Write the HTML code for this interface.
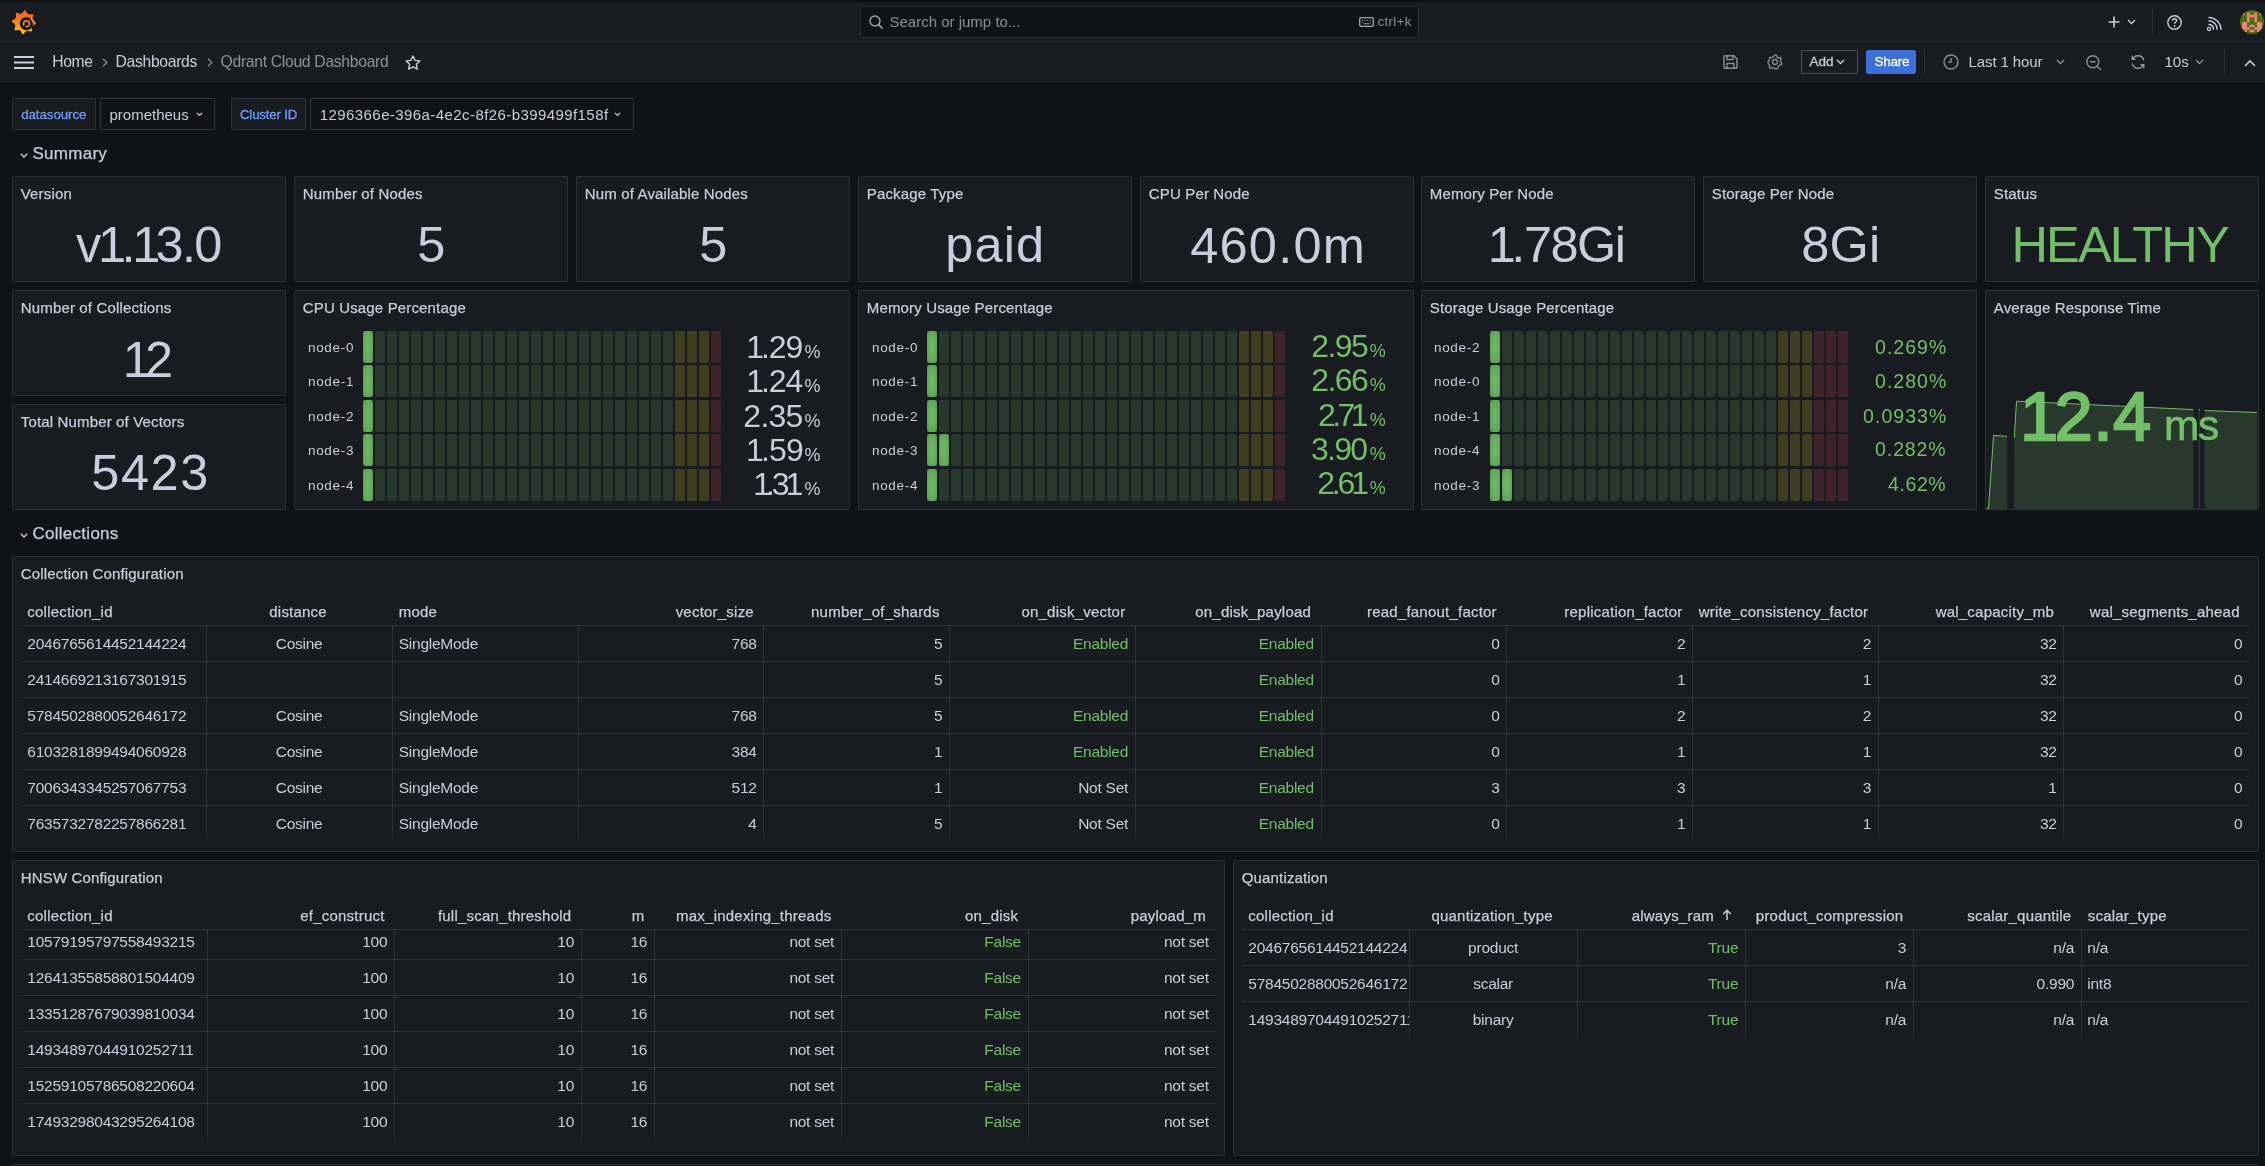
<!DOCTYPE html><html><head><meta charset="utf-8"><title>Qdrant Cloud Dashboard</title><style>
*{box-sizing:border-box;margin:0;padding:0}
html,body{width:2265px;height:1166px;overflow:hidden;background:#111217;font-family:"Liberation Sans",sans-serif;color:#ccccdc}
.a{position:absolute}
.panel{position:absolute;background:#181b1f;border:1px solid rgba(204,204,220,0.12);border-radius:2px;overflow:hidden}
.t{position:absolute;white-space:nowrap;line-height:1}
.cell{position:absolute;border-radius:2px}
svg{position:absolute;overflow:visible}
</style></head><body><div style="position:absolute;left:0;top:0;width:2265px;height:1166px;will-change:transform">
<div class="a" style="left:0px;top:0px;width:2265px;height:2px;background:#0e0e10;"></div>
<div class="a" style="left:0px;top:2px;width:2265px;height:39px;background:#181b1f;"></div>
<div class="a" style="left:0px;top:41px;width:2265px;height:1px;background:rgba(204,204,220,0.12);"></div>
<div class="a" style="left:0px;top:42px;width:2265px;height:39px;background:#181b1f;"></div>
<div class="a" style="left:0px;top:81px;width:2265px;height:1px;background:rgba(204,204,220,0.12);"></div>
<svg style="left:12px;top:10px" width="24" height="24" viewBox="0 0 24 24">
<defs><linearGradient id="lg" x1="0" y1="0" x2="0" y2="1"><stop offset="0" stop-color="#f15b2a"/><stop offset="0.45" stop-color="#f47f20"/><stop offset="1" stop-color="#fcc80f"/></linearGradient></defs>
<path fill="url(#lg)" d="M10.56 2.69 L12.11 0.30 L13.76 0.45 L14.87 3.07 L16.15 4.04 L17.68 4.53 L20.46 3.93 L21.53 5.21 L20.45 7.84 L20.67 9.43 L21.41 10.86 L23.80 12.41 L23.65 14.06 L21.03 15.17 L20.06 16.45 L19.57 17.98 L20.17 20.76 L18.89 21.83 L16.26 20.75 L14.67 20.97 L13.24 21.71 L11.69 24.10 L10.04 23.95 L8.93 21.33 L7.65 20.36 L6.12 19.87 L3.34 20.47 L2.27 19.19 L3.35 16.56 L3.13 14.97 L2.39 13.54 L0.00 11.99 L0.15 10.34 L2.77 9.23 L3.74 7.95 L4.23 6.42 L3.63 3.64 L4.91 2.57 L7.54 3.65 L9.13 3.43Z"/>
<circle cx="14.5" cy="13.6" r="5.2" fill="none" stroke="#181b1f" stroke-width="3.0"/>
<path d="M19.2 7.6 C21.5 9.2 22.6 11.2 22.6 13.6 L20.2 12.6 C19.9 11.0 19.2 9.8 18.0 9.0 Z" fill="#f58a1c"/>
<circle cx="14.5" cy="13.9" r="2.2" fill="#181b1f"/>
<path d="M13.6 15.0 L11.9 16.9" stroke="#181b1f" stroke-width="1.5"/>
</svg>
<div class="a" style="left:860px;top:6px;width:559px;height:32px;background:#111217;border:1px solid rgba(204,204,220,0.15);border-radius:2px;"></div>
<svg style="left:869px;top:15px" width="14" height="14" viewBox="0 0 14 14"><circle cx="6" cy="6" r="5" fill="none" stroke="#a4a4ad" stroke-width="1.4"/><path d="M9.6 9.6 L13.2 13.2" stroke="#a4a4ad" stroke-width="1.5" stroke-linecap="round"/></svg>
<div class="t" style="left:889.5px;top:14.00px;font-size:15px;color:rgba(204,204,220,0.65);font-weight:normal;">Search or jump to...</div>
<svg style="left:1359px;top:17px" width="15" height="10" viewBox="0 0 15 10"><rect x="0.7" y="0.7" width="13.6" height="8.6" rx="1.2" fill="none" stroke="#a4a4ad" stroke-width="1.3"/><path d="M2.8 3.2h1.2M5.3 3.2h1.2M7.8 3.2h1.2M10.3 3.2h1.2M2.8 5.2h0.8M11.2 5.2h0.8M4.5 6.8h6" stroke="#a4a4ad" stroke-width="1.1"/></svg>
<div class="t" style="left:1377.5px;top:15.00px;font-size:13.3px;color:rgba(204,204,220,0.65);font-weight:normal;letter-spacing:0.35px">ctrl+k</div>
<svg style="left:2108px;top:16px" width="12" height="12" viewBox="0 0 12 12"><path d="M6 0.5V11.5M0.5 6H11.5" stroke="#ccccdc" stroke-width="1.6"/></svg>
<svg style="left:2127px;top:19px" width="9" height="6" viewBox="0 0 9 6"><path d="M1 1L4.5 4.5L8 1" fill="none" stroke="#ccccdc" stroke-width="1.4"/></svg>
<div class="a" style="left:2152px;top:10px;width:1px;height:24px;background:rgba(204,204,220,0.12);"></div>
<svg style="left:2167px;top:14.5px" width="15" height="15" viewBox="0 0 15 15"><circle cx="7.5" cy="7.5" r="6.7" fill="none" stroke="#ccccdc" stroke-width="1.4"/><path d="M5.4 5.7C5.4 4.4 6.4 3.7 7.5 3.7C8.7 3.7 9.6 4.5 9.6 5.6C9.6 7 7.6 7.1 7.6 8.7" fill="none" stroke="#ccccdc" stroke-width="1.4"/><circle cx="7.6" cy="11" r="0.9" fill="#ccccdc"/></svg>
<svg style="left:2207px;top:16.5px" width="15" height="14" viewBox="0 0 15 14"><circle cx="2" cy="12" r="1.6" fill="none" stroke="#ccccdc" stroke-width="1.2"/><path d="M1.5 7.5C4.5 7.5 6.5 9.5 6.5 12.7M1.5 3.8C6.5 3.8 10.2 7.5 10.2 12.7M1.5 0.5C8.5 0.5 14 6 14 12.7" fill="none" stroke="#ccccdc" stroke-width="1.4"/></svg>
<svg style="left:2240px;top:10px" width="24" height="24" viewBox="0 0 24 24"><defs><clipPath id="avc"><circle cx="12" cy="12" r="12"/></clipPath></defs><circle cx="12" cy="12" r="12" fill="#4b6e0c"/><g clip-path="url(#avc)" fill="#f2847e"><rect x="2.10" y="2.30" width="2.47" height="2.47"/><rect x="19.39" y="2.30" width="2.47" height="2.47"/><rect x="7.04" y="2.30" width="2.47" height="9.88"/><rect x="14.45" y="2.30" width="2.47" height="9.88"/><rect x="9.51" y="4.77" width="4.94" height="2.47"/><rect x="2.10" y="12.18" width="4.94" height="7.41"/><rect x="16.92" y="12.18" width="4.94" height="7.41"/><rect x="7.04" y="17.12" width="2.47" height="2.47"/><rect x="14.45" y="17.12" width="2.47" height="2.47"/><rect x="9.51" y="14.65" width="4.94" height="2.47"/><rect x="4.57" y="19.59" width="2.47" height="2.47"/><rect x="16.92" y="19.59" width="2.47" height="2.47"/><rect x="9.51" y="19.59" width="4.94" height="2.47"/></g></svg>
<svg style="left:14px;top:56px" width="20" height="13" viewBox="0 0 20 13"><path d="M0 1H20M0 6.5H20M0 12H20" stroke="#ccccdc" stroke-width="1.8"/></svg>
<div class="t" style="left:52.2px;top:54.00px;font-size:15.7px;color:#ccccdc;font-weight:normal;letter-spacing:-0.32px">Home</div>
<svg style="left:101.5px;top:57.5px" width="6" height="9" viewBox="0 0 6 9"><path d="M1 0.8L4.8 4.5L1 8.2" fill="none" stroke="rgba(204,204,220,0.65)" stroke-width="1.3"/></svg>
<div class="t" style="left:115.6px;top:54.00px;font-size:15.7px;color:#ccccdc;font-weight:normal;letter-spacing:-0.32px">Dashboards</div>
<svg style="left:206.5px;top:57.5px" width="6" height="9" viewBox="0 0 6 9"><path d="M1 0.8L4.8 4.5L1 8.2" fill="none" stroke="rgba(204,204,220,0.65)" stroke-width="1.3"/></svg>
<div class="t" style="left:220.6px;top:54.00px;font-size:15.7px;color:rgba(204,204,220,0.65);font-weight:normal;letter-spacing:-0.3px">Qdrant Cloud Dashboard</div>
<svg style="left:405px;top:55px" width="16" height="15" viewBox="0 0 16 15"><path d="M8 1L10.1 5.4L14.9 6L11.4 9.3L12.3 14.1L8 11.8L3.7 14.1L4.6 9.3L1.1 6L5.9 5.4Z" fill="none" stroke="#ccccdc" stroke-width="1.4" stroke-linejoin="round"/></svg>
<svg style="left:1723px;top:55px" width="15" height="14" viewBox="0 0 15 14"><path d="M1 1.5V12.5A0.8 0.8 0 0 0 1.8 13.3H13.2A0.8 0.8 0 0 0 14 12.5V4L11 0.8H1.8A0.8 0.8 0 0 0 1 1.5Z" fill="none" stroke="rgba(204,204,220,0.65)" stroke-width="1.4"/><path d="M4 1V4.5H10V1M4 13V8.5H11V13" fill="none" stroke="rgba(204,204,220,0.65)" stroke-width="1.3"/></svg>
<svg style="left:1767px;top:54px" width="16" height="16" viewBox="0 0 16 16"><path d="M8 0.9L9.4 1.2L9.8 3.1L11.5 4.1L13.3 3.4L14.3 4.6L13.5 6.3V8.3L14.9 9.6L14.2 11L12.3 11.1L11 12.6L11 14.5L9.6 15H8.2L6.8 13.6H5L3.5 14.5L2.3 13.5L2.7 11.6L1.7 10L0.9 8.6L1.4 7.2L2.7 6L2.5 4.1L3.7 3.1L5.5 3.6L6.8 2.4Z" fill="none" stroke="rgba(204,204,220,0.65)" stroke-width="1.3" stroke-linejoin="round"/><circle cx="8" cy="8" r="2.5" fill="none" stroke="rgba(204,204,220,0.65)" stroke-width="1.3"/></svg>
<div class="a" style="left:1801px;top:50px;width:57px;height:24px;background:transparent;border:1px solid rgba(204,204,220,0.3);border-radius:2px;"></div>
<div class="t" style="left:1809.5px;top:55.00px;font-size:13.5px;color:#ccccdc;font-weight:normal;-webkit-text-stroke:0.3px #ccccdc">Add</div>
<svg style="left:1836px;top:58.8px" width="9" height="6" viewBox="0 0 9 6"><path d="M1 1L4.5 4.5L8 1" fill="none" stroke="#ccccdc" stroke-width="1.4"/></svg>
<div class="a" style="left:1866px;top:50px;width:50px;height:24px;background:#3d71d9;border:1px solid #3d71d9;border-radius:2px;"></div>
<div class="t" style="left:1874.5px;top:55.00px;font-size:13.5px;color:#ffffff;font-weight:normal;-webkit-text-stroke:0.3px #ffffff;letter-spacing:-0.25px">Share</div>
<div class="a" style="left:1924px;top:50px;width:1px;height:24px;background:rgba(204,204,220,0.12);"></div>
<svg style="left:1943px;top:54px" width="16" height="16" viewBox="0 0 16 16"><circle cx="8" cy="8" r="7" fill="none" stroke="rgba(204,204,220,0.65)" stroke-width="1.4"/><path d="M8 4V8H5.3" fill="none" stroke="rgba(204,204,220,0.65)" stroke-width="1.4"/></svg>
<div class="t" style="left:1968.5px;top:54.00px;font-size:15px;color:#ccccdc;font-weight:normal;letter-spacing:-0.1px">Last 1 hour</div>
<svg style="left:2055.5px;top:59px" width="9" height="6" viewBox="0 0 9 6"><path d="M1 1L4.5 4.5L8 1" fill="none" stroke="rgba(204,204,220,0.65)" stroke-width="1.4"/></svg>
<svg style="left:2086px;top:54.5px" width="16" height="16" viewBox="0 0 16 16"><circle cx="6.8" cy="6.8" r="6" fill="none" stroke="rgba(204,204,220,0.65)" stroke-width="1.4"/><path d="M4 6.8H9.6M11.2 11.2L15 15" fill="none" stroke="rgba(204,204,220,0.65)" stroke-width="1.4"/></svg>
<svg style="left:2130px;top:54px" width="16" height="16" viewBox="0 0 16 16"><path d="M13.8 6.5A6 6 0 0 0 2.6 5M2.2 9.5A6 6 0 0 0 13.4 11" fill="none" stroke="rgba(204,204,220,0.65)" stroke-width="1.4"/><path d="M2.2 1.8V5.3H5.6M13.8 14.2V10.7H10.4" fill="none" stroke="rgba(204,204,220,0.65)" stroke-width="1.4"/></svg>
<div class="t" style="left:2164.5px;top:54.00px;font-size:15px;color:#ccccdc;font-weight:normal;">10s</div>
<svg style="left:2195px;top:59px" width="9" height="6" viewBox="0 0 9 6"><path d="M1 1L4.5 4.5L8 1" fill="none" stroke="rgba(204,204,220,0.65)" stroke-width="1.4"/></svg>
<div class="a" style="left:2224px;top:50px;width:1px;height:24px;background:rgba(204,204,220,0.12);"></div>
<svg style="left:2244px;top:59px" width="12" height="8" viewBox="0 0 12 8"><path d="M1 7L6 2L11 7" fill="none" stroke="#ccccdc" stroke-width="1.6"/></svg>
<div class="a" style="left:12px;top:98px;width:84px;height:32px;background:#181b1f;border:1px solid rgba(204,204,220,0.12);border-radius:2px;"></div>
<div class="t" style="left:21.2px;top:108.00px;font-size:13.2px;color:#6e9fff;font-weight:normal;-webkit-text-stroke:0.3px #6e9fff">datasource</div>
<div class="a" style="left:100px;top:98px;width:115px;height:32px;background:#111217;border:1px solid rgba(204,204,220,0.2);border-radius:2px;"></div>
<div class="t" style="left:109.5px;top:107.00px;font-size:15px;color:#ccccdc;font-weight:normal;">prometheus</div>
<svg style="left:196px;top:111.5px" width="7" height="5" viewBox="0 0 7 5"><path d="M0.8 0.8L3.5 3.5L6.2 0.8" fill="none" stroke="#ccccdc" stroke-width="1.2"/></svg>
<div class="a" style="left:231px;top:98px;width:75px;height:32px;background:#181b1f;border:1px solid rgba(204,204,220,0.12);border-radius:2px;"></div>
<div class="t" style="left:240px;top:108.00px;font-size:13.2px;color:#6e9fff;font-weight:normal;-webkit-text-stroke:0.3px #6e9fff;letter-spacing:-0.15px">Cluster ID</div>
<div class="a" style="left:310px;top:98px;width:324px;height:32px;background:#111217;border:1px solid rgba(204,204,220,0.2);border-radius:2px;"></div>
<div class="t" style="left:319.8px;top:107.00px;font-size:15px;color:#ccccdc;font-weight:normal;letter-spacing:0.42px">1296366e-396a-4e2c-8f26-b399499f158f</div>
<svg style="left:614px;top:111.5px" width="7" height="5" viewBox="0 0 7 5"><path d="M0.8 0.8L3.5 3.5L6.2 0.8" fill="none" stroke="#ccccdc" stroke-width="1.2"/></svg>
<svg style="left:20px;top:152.6px" width="8" height="5" viewBox="0 0 8 5"><path d="M0.8 0.8L4 4L7.2 0.8" fill="none" stroke="#ccccdc" stroke-width="1.3"/></svg>
<div class="t" style="left:32.5px;top:145.00px;font-size:17px;color:#ccccdc;font-weight:normal;letter-spacing:0.27px;-webkit-text-stroke:0.25px #ccccdc">Summary</div>
<svg style="left:20px;top:532.6999999999999px" width="8" height="5" viewBox="0 0 8 5"><path d="M0.8 0.8L4 4L7.2 0.8" fill="none" stroke="#ccccdc" stroke-width="1.3"/></svg>
<div class="t" style="left:32.5px;top:525.00px;font-size:17px;color:#ccccdc;font-weight:normal;letter-spacing:0.27px;-webkit-text-stroke:0.25px #ccccdc">Collections</div>
<div class="panel" style="left:12px;top:176px;width:274px;height:106px"></div>
<div class="t" style="left:20.8px;top:186.00px;font-size:15px;color:#ccccdc;font-weight:normal;letter-spacing:0.15px;-webkit-text-stroke:0.25px #ccccdc">Version</div>
<div class="t" style="left:75.99px;top:219.97px;font-size:50.50px;color:#ccccdc;letter-spacing:-1.710px">v<span style="margin:0 -0.06em 0 -0.03em">1</span>.<span style="margin:0 -0.06em 0 -0.03em">1</span>3.0</div>
<div class="panel" style="left:294px;top:176px;width:274px;height:106px"></div>
<div class="t" style="left:302.8px;top:186.00px;font-size:15px;color:#ccccdc;font-weight:normal;letter-spacing:0.15px;-webkit-text-stroke:0.25px #ccccdc">Number of Nodes</div>
<div class="t" style="left:417.26px;top:220.06px;font-size:50.50px;color:#ccccdc;letter-spacing:0.000px">5</div>
<div class="panel" style="left:576px;top:176px;width:274px;height:106px"></div>
<div class="t" style="left:584.8px;top:186.00px;font-size:15px;color:#ccccdc;font-weight:normal;letter-spacing:0.15px;-webkit-text-stroke:0.25px #ccccdc">Num of Available Nodes</div>
<div class="t" style="left:699.26px;top:220.06px;font-size:50.50px;color:#ccccdc;letter-spacing:0.000px">5</div>
<div class="panel" style="left:858px;top:176px;width:274px;height:106px"></div>
<div class="t" style="left:866.8px;top:186.00px;font-size:15px;color:#ccccdc;font-weight:normal;letter-spacing:0.15px;-webkit-text-stroke:0.25px #ccccdc">Package Type</div>
<div class="t" style="left:945.36px;top:219.70px;font-size:50.50px;color:#ccccdc;letter-spacing:1.050px">paid</div>
<div class="panel" style="left:1140px;top:176px;width:274px;height:106px"></div>
<div class="t" style="left:1148.8px;top:186.00px;font-size:15px;color:#ccccdc;font-weight:normal;letter-spacing:0.15px;-webkit-text-stroke:0.25px #ccccdc">CPU Per Node</div>
<div class="t" style="left:1190.17px;top:220.69px;font-size:50.50px;color:#ccccdc;letter-spacing:1.260px">460.0m</div>
<div class="panel" style="left:1421px;top:176px;width:274px;height:106px"></div>
<div class="t" style="left:1429.8px;top:186.00px;font-size:15px;color:#ccccdc;font-weight:normal;letter-spacing:0.15px;-webkit-text-stroke:0.25px #ccccdc">Memory Per Node</div>
<div class="t" style="left:1489.27px;top:219.97px;font-size:50.50px;color:#ccccdc;letter-spacing:-1.494px"><span style="margin:0 -0.06em 0 -0.03em">1</span>.78Gi</div>
<div class="panel" style="left:1703px;top:176px;width:274px;height:106px"></div>
<div class="t" style="left:1711.8px;top:186.00px;font-size:15px;color:#ccccdc;font-weight:normal;letter-spacing:0.15px;-webkit-text-stroke:0.25px #ccccdc">Storage Per Node</div>
<div class="t" style="left:1801.26px;top:219.97px;font-size:50.50px;color:#ccccdc;letter-spacing:0.135px">8Gi</div>
<div class="panel" style="left:1985px;top:176px;width:274px;height:106px"></div>
<div class="t" style="left:1993.8px;top:186.00px;font-size:15px;color:#ccccdc;font-weight:normal;letter-spacing:0.15px;-webkit-text-stroke:0.25px #ccccdc">Status</div>
<div class="t" style="left:2011.43px;top:219.97px;font-size:50.50px;color:#73bf69;letter-spacing:-1.815px">HEALTHY</div>
<div class="panel" style="left:12px;top:290px;width:274px;height:106px"></div>
<div class="t" style="left:20.8px;top:300.00px;font-size:15px;color:#ccccdc;font-weight:normal;letter-spacing:0.15px;-webkit-text-stroke:0.25px #ccccdc">Number of Collections</div>
<div class="t" style="left:124.24px;top:335.13px;font-size:50.50px;color:#ccccdc;letter-spacing:-2.700px"><span style="margin:0 -0.06em 0 -0.03em">1</span>2</div>
<div class="panel" style="left:12px;top:404px;width:274px;height:106px"></div>
<div class="t" style="left:20.8px;top:414.00px;font-size:15px;color:#ccccdc;font-weight:normal;letter-spacing:0.15px;-webkit-text-stroke:0.25px #ccccdc">Total Number of Vectors</div>
<div class="t" style="left:91.22px;top:448.18px;font-size:50.50px;color:#ccccdc;letter-spacing:1.590px">5423</div>
<div class="panel" style="left:294px;top:290px;width:556px;height:220px"></div>
<div class="t" style="left:302.8px;top:300.00px;font-size:15px;color:#ccccdc;font-weight:normal;letter-spacing:0.15px;-webkit-text-stroke:0.25px #ccccdc">CPU Usage Percentage</div>
<div class="t" style="right:1910.8px;top:341.00px;font-size:13.5px;color:#ccccdc;font-weight:normal;letter-spacing:0.7px">node-0</div>
<div class="cell" style="left:363px;top:331px;width:10px;height:32px;background:radial-gradient(ellipse at center,#6fbd66 0%,#64a95c 65%,#578f51 100%)"></div>
<div class="cell" style="left:375px;top:331px;width:10px;height:32px;background:rgba(115,191,105,0.18)"></div>
<div class="cell" style="left:387px;top:331px;width:10px;height:32px;background:rgba(115,191,105,0.18)"></div>
<div class="cell" style="left:399px;top:331px;width:10px;height:32px;background:rgba(115,191,105,0.18)"></div>
<div class="cell" style="left:411px;top:331px;width:10px;height:32px;background:rgba(115,191,105,0.18)"></div>
<div class="cell" style="left:423px;top:331px;width:10px;height:32px;background:rgba(115,191,105,0.18)"></div>
<div class="cell" style="left:435px;top:331px;width:10px;height:32px;background:rgba(115,191,105,0.18)"></div>
<div class="cell" style="left:447px;top:331px;width:10px;height:32px;background:rgba(115,191,105,0.18)"></div>
<div class="cell" style="left:459px;top:331px;width:10px;height:32px;background:rgba(115,191,105,0.18)"></div>
<div class="cell" style="left:471px;top:331px;width:10px;height:32px;background:rgba(115,191,105,0.18)"></div>
<div class="cell" style="left:483px;top:331px;width:10px;height:32px;background:rgba(115,191,105,0.18)"></div>
<div class="cell" style="left:495px;top:331px;width:10px;height:32px;background:rgba(115,191,105,0.18)"></div>
<div class="cell" style="left:507px;top:331px;width:10px;height:32px;background:rgba(115,191,105,0.18)"></div>
<div class="cell" style="left:519px;top:331px;width:10px;height:32px;background:rgba(115,191,105,0.18)"></div>
<div class="cell" style="left:531px;top:331px;width:10px;height:32px;background:rgba(115,191,105,0.18)"></div>
<div class="cell" style="left:543px;top:331px;width:10px;height:32px;background:rgba(115,191,105,0.18)"></div>
<div class="cell" style="left:555px;top:331px;width:10px;height:32px;background:rgba(115,191,105,0.18)"></div>
<div class="cell" style="left:567px;top:331px;width:10px;height:32px;background:rgba(115,191,105,0.18)"></div>
<div class="cell" style="left:579px;top:331px;width:10px;height:32px;background:rgba(115,191,105,0.18)"></div>
<div class="cell" style="left:591px;top:331px;width:10px;height:32px;background:rgba(115,191,105,0.18)"></div>
<div class="cell" style="left:603px;top:331px;width:10px;height:32px;background:rgba(115,191,105,0.18)"></div>
<div class="cell" style="left:615px;top:331px;width:10px;height:32px;background:rgba(115,191,105,0.18)"></div>
<div class="cell" style="left:627px;top:331px;width:10px;height:32px;background:rgba(115,191,105,0.18)"></div>
<div class="cell" style="left:639px;top:331px;width:10px;height:32px;background:rgba(115,191,105,0.18)"></div>
<div class="cell" style="left:651px;top:331px;width:10px;height:32px;background:rgba(115,191,105,0.18)"></div>
<div class="cell" style="left:663px;top:331px;width:10px;height:32px;background:rgba(115,191,105,0.18)"></div>
<div class="cell" style="left:675px;top:331px;width:10px;height:32px;background:rgba(250,222,42,0.18)"></div>
<div class="cell" style="left:687px;top:331px;width:10px;height:32px;background:rgba(250,222,42,0.18)"></div>
<div class="cell" style="left:699px;top:331px;width:10px;height:32px;background:rgba(250,222,42,0.18)"></div>
<div class="cell" style="left:711px;top:331px;width:10px;height:32px;background:rgba(242,73,92,0.18)"></div>
<div class="t" style="left:747.15px;top:331.11px;font-size:32.00px;color:#ccccdc;letter-spacing:-1.050px"><span style="margin:0 -0.06em 0 -0.03em">1</span>.29</div>
<div class="t" style="left:804.50px;top:342.96px;font-size:18.00px;color:#ccccdc;letter-spacing:0.000px">%</div>
<div class="t" style="right:1910.8px;top:375.00px;font-size:13.5px;color:#ccccdc;font-weight:normal;letter-spacing:0.7px">node-1</div>
<div class="cell" style="left:363px;top:365px;width:10px;height:32px;background:radial-gradient(ellipse at center,#6fbd66 0%,#64a95c 65%,#578f51 100%)"></div>
<div class="cell" style="left:375px;top:365px;width:10px;height:32px;background:rgba(115,191,105,0.18)"></div>
<div class="cell" style="left:387px;top:365px;width:10px;height:32px;background:rgba(115,191,105,0.18)"></div>
<div class="cell" style="left:399px;top:365px;width:10px;height:32px;background:rgba(115,191,105,0.18)"></div>
<div class="cell" style="left:411px;top:365px;width:10px;height:32px;background:rgba(115,191,105,0.18)"></div>
<div class="cell" style="left:423px;top:365px;width:10px;height:32px;background:rgba(115,191,105,0.18)"></div>
<div class="cell" style="left:435px;top:365px;width:10px;height:32px;background:rgba(115,191,105,0.18)"></div>
<div class="cell" style="left:447px;top:365px;width:10px;height:32px;background:rgba(115,191,105,0.18)"></div>
<div class="cell" style="left:459px;top:365px;width:10px;height:32px;background:rgba(115,191,105,0.18)"></div>
<div class="cell" style="left:471px;top:365px;width:10px;height:32px;background:rgba(115,191,105,0.18)"></div>
<div class="cell" style="left:483px;top:365px;width:10px;height:32px;background:rgba(115,191,105,0.18)"></div>
<div class="cell" style="left:495px;top:365px;width:10px;height:32px;background:rgba(115,191,105,0.18)"></div>
<div class="cell" style="left:507px;top:365px;width:10px;height:32px;background:rgba(115,191,105,0.18)"></div>
<div class="cell" style="left:519px;top:365px;width:10px;height:32px;background:rgba(115,191,105,0.18)"></div>
<div class="cell" style="left:531px;top:365px;width:10px;height:32px;background:rgba(115,191,105,0.18)"></div>
<div class="cell" style="left:543px;top:365px;width:10px;height:32px;background:rgba(115,191,105,0.18)"></div>
<div class="cell" style="left:555px;top:365px;width:10px;height:32px;background:rgba(115,191,105,0.18)"></div>
<div class="cell" style="left:567px;top:365px;width:10px;height:32px;background:rgba(115,191,105,0.18)"></div>
<div class="cell" style="left:579px;top:365px;width:10px;height:32px;background:rgba(115,191,105,0.18)"></div>
<div class="cell" style="left:591px;top:365px;width:10px;height:32px;background:rgba(115,191,105,0.18)"></div>
<div class="cell" style="left:603px;top:365px;width:10px;height:32px;background:rgba(115,191,105,0.18)"></div>
<div class="cell" style="left:615px;top:365px;width:10px;height:32px;background:rgba(115,191,105,0.18)"></div>
<div class="cell" style="left:627px;top:365px;width:10px;height:32px;background:rgba(115,191,105,0.18)"></div>
<div class="cell" style="left:639px;top:365px;width:10px;height:32px;background:rgba(115,191,105,0.18)"></div>
<div class="cell" style="left:651px;top:365px;width:10px;height:32px;background:rgba(115,191,105,0.18)"></div>
<div class="cell" style="left:663px;top:365px;width:10px;height:32px;background:rgba(115,191,105,0.18)"></div>
<div class="cell" style="left:675px;top:365px;width:10px;height:32px;background:rgba(250,222,42,0.18)"></div>
<div class="cell" style="left:687px;top:365px;width:10px;height:32px;background:rgba(250,222,42,0.18)"></div>
<div class="cell" style="left:699px;top:365px;width:10px;height:32px;background:rgba(250,222,42,0.18)"></div>
<div class="cell" style="left:711px;top:365px;width:10px;height:32px;background:rgba(242,73,92,0.18)"></div>
<div class="t" style="left:747.15px;top:365.11px;font-size:32.00px;color:#ccccdc;letter-spacing:-1.050px"><span style="margin:0 -0.06em 0 -0.03em">1</span>.24</div>
<div class="t" style="left:804.50px;top:376.96px;font-size:18.00px;color:#ccccdc;letter-spacing:0.000px">%</div>
<div class="t" style="right:1910.8px;top:410.00px;font-size:13.5px;color:#ccccdc;font-weight:normal;letter-spacing:0.7px">node-2</div>
<div class="cell" style="left:363px;top:400px;width:10px;height:32px;background:radial-gradient(ellipse at center,#6fbd66 0%,#64a95c 65%,#578f51 100%)"></div>
<div class="cell" style="left:375px;top:400px;width:10px;height:32px;background:rgba(115,191,105,0.18)"></div>
<div class="cell" style="left:387px;top:400px;width:10px;height:32px;background:rgba(115,191,105,0.18)"></div>
<div class="cell" style="left:399px;top:400px;width:10px;height:32px;background:rgba(115,191,105,0.18)"></div>
<div class="cell" style="left:411px;top:400px;width:10px;height:32px;background:rgba(115,191,105,0.18)"></div>
<div class="cell" style="left:423px;top:400px;width:10px;height:32px;background:rgba(115,191,105,0.18)"></div>
<div class="cell" style="left:435px;top:400px;width:10px;height:32px;background:rgba(115,191,105,0.18)"></div>
<div class="cell" style="left:447px;top:400px;width:10px;height:32px;background:rgba(115,191,105,0.18)"></div>
<div class="cell" style="left:459px;top:400px;width:10px;height:32px;background:rgba(115,191,105,0.18)"></div>
<div class="cell" style="left:471px;top:400px;width:10px;height:32px;background:rgba(115,191,105,0.18)"></div>
<div class="cell" style="left:483px;top:400px;width:10px;height:32px;background:rgba(115,191,105,0.18)"></div>
<div class="cell" style="left:495px;top:400px;width:10px;height:32px;background:rgba(115,191,105,0.18)"></div>
<div class="cell" style="left:507px;top:400px;width:10px;height:32px;background:rgba(115,191,105,0.18)"></div>
<div class="cell" style="left:519px;top:400px;width:10px;height:32px;background:rgba(115,191,105,0.18)"></div>
<div class="cell" style="left:531px;top:400px;width:10px;height:32px;background:rgba(115,191,105,0.18)"></div>
<div class="cell" style="left:543px;top:400px;width:10px;height:32px;background:rgba(115,191,105,0.18)"></div>
<div class="cell" style="left:555px;top:400px;width:10px;height:32px;background:rgba(115,191,105,0.18)"></div>
<div class="cell" style="left:567px;top:400px;width:10px;height:32px;background:rgba(115,191,105,0.18)"></div>
<div class="cell" style="left:579px;top:400px;width:10px;height:32px;background:rgba(115,191,105,0.18)"></div>
<div class="cell" style="left:591px;top:400px;width:10px;height:32px;background:rgba(115,191,105,0.18)"></div>
<div class="cell" style="left:603px;top:400px;width:10px;height:32px;background:rgba(115,191,105,0.18)"></div>
<div class="cell" style="left:615px;top:400px;width:10px;height:32px;background:rgba(115,191,105,0.18)"></div>
<div class="cell" style="left:627px;top:400px;width:10px;height:32px;background:rgba(115,191,105,0.18)"></div>
<div class="cell" style="left:639px;top:400px;width:10px;height:32px;background:rgba(115,191,105,0.18)"></div>
<div class="cell" style="left:651px;top:400px;width:10px;height:32px;background:rgba(115,191,105,0.18)"></div>
<div class="cell" style="left:663px;top:400px;width:10px;height:32px;background:rgba(115,191,105,0.18)"></div>
<div class="cell" style="left:675px;top:400px;width:10px;height:32px;background:rgba(250,222,42,0.18)"></div>
<div class="cell" style="left:687px;top:400px;width:10px;height:32px;background:rgba(250,222,42,0.18)"></div>
<div class="cell" style="left:699px;top:400px;width:10px;height:32px;background:rgba(250,222,42,0.18)"></div>
<div class="cell" style="left:711px;top:400px;width:10px;height:32px;background:rgba(242,73,92,0.18)"></div>
<div class="t" style="left:743.35px;top:400.26px;font-size:32.00px;color:#ccccdc;letter-spacing:-0.750px">2.35</div>
<div class="t" style="left:804.50px;top:412.11px;font-size:18.00px;color:#ccccdc;letter-spacing:0.000px">%</div>
<div class="t" style="right:1910.8px;top:444.00px;font-size:13.5px;color:#ccccdc;font-weight:normal;letter-spacing:0.7px">node-3</div>
<div class="cell" style="left:363px;top:434px;width:10px;height:32px;background:radial-gradient(ellipse at center,#6fbd66 0%,#64a95c 65%,#578f51 100%)"></div>
<div class="cell" style="left:375px;top:434px;width:10px;height:32px;background:rgba(115,191,105,0.18)"></div>
<div class="cell" style="left:387px;top:434px;width:10px;height:32px;background:rgba(115,191,105,0.18)"></div>
<div class="cell" style="left:399px;top:434px;width:10px;height:32px;background:rgba(115,191,105,0.18)"></div>
<div class="cell" style="left:411px;top:434px;width:10px;height:32px;background:rgba(115,191,105,0.18)"></div>
<div class="cell" style="left:423px;top:434px;width:10px;height:32px;background:rgba(115,191,105,0.18)"></div>
<div class="cell" style="left:435px;top:434px;width:10px;height:32px;background:rgba(115,191,105,0.18)"></div>
<div class="cell" style="left:447px;top:434px;width:10px;height:32px;background:rgba(115,191,105,0.18)"></div>
<div class="cell" style="left:459px;top:434px;width:10px;height:32px;background:rgba(115,191,105,0.18)"></div>
<div class="cell" style="left:471px;top:434px;width:10px;height:32px;background:rgba(115,191,105,0.18)"></div>
<div class="cell" style="left:483px;top:434px;width:10px;height:32px;background:rgba(115,191,105,0.18)"></div>
<div class="cell" style="left:495px;top:434px;width:10px;height:32px;background:rgba(115,191,105,0.18)"></div>
<div class="cell" style="left:507px;top:434px;width:10px;height:32px;background:rgba(115,191,105,0.18)"></div>
<div class="cell" style="left:519px;top:434px;width:10px;height:32px;background:rgba(115,191,105,0.18)"></div>
<div class="cell" style="left:531px;top:434px;width:10px;height:32px;background:rgba(115,191,105,0.18)"></div>
<div class="cell" style="left:543px;top:434px;width:10px;height:32px;background:rgba(115,191,105,0.18)"></div>
<div class="cell" style="left:555px;top:434px;width:10px;height:32px;background:rgba(115,191,105,0.18)"></div>
<div class="cell" style="left:567px;top:434px;width:10px;height:32px;background:rgba(115,191,105,0.18)"></div>
<div class="cell" style="left:579px;top:434px;width:10px;height:32px;background:rgba(115,191,105,0.18)"></div>
<div class="cell" style="left:591px;top:434px;width:10px;height:32px;background:rgba(115,191,105,0.18)"></div>
<div class="cell" style="left:603px;top:434px;width:10px;height:32px;background:rgba(115,191,105,0.18)"></div>
<div class="cell" style="left:615px;top:434px;width:10px;height:32px;background:rgba(115,191,105,0.18)"></div>
<div class="cell" style="left:627px;top:434px;width:10px;height:32px;background:rgba(115,191,105,0.18)"></div>
<div class="cell" style="left:639px;top:434px;width:10px;height:32px;background:rgba(115,191,105,0.18)"></div>
<div class="cell" style="left:651px;top:434px;width:10px;height:32px;background:rgba(115,191,105,0.18)"></div>
<div class="cell" style="left:663px;top:434px;width:10px;height:32px;background:rgba(115,191,105,0.18)"></div>
<div class="cell" style="left:675px;top:434px;width:10px;height:32px;background:rgba(250,222,42,0.18)"></div>
<div class="cell" style="left:687px;top:434px;width:10px;height:32px;background:rgba(250,222,42,0.18)"></div>
<div class="cell" style="left:699px;top:434px;width:10px;height:32px;background:rgba(250,222,42,0.18)"></div>
<div class="cell" style="left:711px;top:434px;width:10px;height:32px;background:rgba(242,73,92,0.18)"></div>
<div class="t" style="left:747.00px;top:433.71px;font-size:32.00px;color:#ccccdc;letter-spacing:-0.900px"><span style="margin:0 -0.06em 0 -0.03em">1</span>.59</div>
<div class="t" style="left:804.50px;top:445.56px;font-size:18.00px;color:#ccccdc;letter-spacing:0.000px">%</div>
<div class="t" style="right:1910.8px;top:479.00px;font-size:13.5px;color:#ccccdc;font-weight:normal;letter-spacing:0.7px">node-4</div>
<div class="cell" style="left:363px;top:469px;width:10px;height:32px;background:radial-gradient(ellipse at center,#6fbd66 0%,#64a95c 65%,#578f51 100%)"></div>
<div class="cell" style="left:375px;top:469px;width:10px;height:32px;background:rgba(115,191,105,0.18)"></div>
<div class="cell" style="left:387px;top:469px;width:10px;height:32px;background:rgba(115,191,105,0.18)"></div>
<div class="cell" style="left:399px;top:469px;width:10px;height:32px;background:rgba(115,191,105,0.18)"></div>
<div class="cell" style="left:411px;top:469px;width:10px;height:32px;background:rgba(115,191,105,0.18)"></div>
<div class="cell" style="left:423px;top:469px;width:10px;height:32px;background:rgba(115,191,105,0.18)"></div>
<div class="cell" style="left:435px;top:469px;width:10px;height:32px;background:rgba(115,191,105,0.18)"></div>
<div class="cell" style="left:447px;top:469px;width:10px;height:32px;background:rgba(115,191,105,0.18)"></div>
<div class="cell" style="left:459px;top:469px;width:10px;height:32px;background:rgba(115,191,105,0.18)"></div>
<div class="cell" style="left:471px;top:469px;width:10px;height:32px;background:rgba(115,191,105,0.18)"></div>
<div class="cell" style="left:483px;top:469px;width:10px;height:32px;background:rgba(115,191,105,0.18)"></div>
<div class="cell" style="left:495px;top:469px;width:10px;height:32px;background:rgba(115,191,105,0.18)"></div>
<div class="cell" style="left:507px;top:469px;width:10px;height:32px;background:rgba(115,191,105,0.18)"></div>
<div class="cell" style="left:519px;top:469px;width:10px;height:32px;background:rgba(115,191,105,0.18)"></div>
<div class="cell" style="left:531px;top:469px;width:10px;height:32px;background:rgba(115,191,105,0.18)"></div>
<div class="cell" style="left:543px;top:469px;width:10px;height:32px;background:rgba(115,191,105,0.18)"></div>
<div class="cell" style="left:555px;top:469px;width:10px;height:32px;background:rgba(115,191,105,0.18)"></div>
<div class="cell" style="left:567px;top:469px;width:10px;height:32px;background:rgba(115,191,105,0.18)"></div>
<div class="cell" style="left:579px;top:469px;width:10px;height:32px;background:rgba(115,191,105,0.18)"></div>
<div class="cell" style="left:591px;top:469px;width:10px;height:32px;background:rgba(115,191,105,0.18)"></div>
<div class="cell" style="left:603px;top:469px;width:10px;height:32px;background:rgba(115,191,105,0.18)"></div>
<div class="cell" style="left:615px;top:469px;width:10px;height:32px;background:rgba(115,191,105,0.18)"></div>
<div class="cell" style="left:627px;top:469px;width:10px;height:32px;background:rgba(115,191,105,0.18)"></div>
<div class="cell" style="left:639px;top:469px;width:10px;height:32px;background:rgba(115,191,105,0.18)"></div>
<div class="cell" style="left:651px;top:469px;width:10px;height:32px;background:rgba(115,191,105,0.18)"></div>
<div class="cell" style="left:663px;top:469px;width:10px;height:32px;background:rgba(115,191,105,0.18)"></div>
<div class="cell" style="left:675px;top:469px;width:10px;height:32px;background:rgba(250,222,42,0.18)"></div>
<div class="cell" style="left:687px;top:469px;width:10px;height:32px;background:rgba(250,222,42,0.18)"></div>
<div class="cell" style="left:699px;top:469px;width:10px;height:32px;background:rgba(250,222,42,0.18)"></div>
<div class="cell" style="left:711px;top:469px;width:10px;height:32px;background:rgba(242,73,92,0.18)"></div>
<div class="t" style="left:754.15px;top:467.71px;font-size:32.00px;color:#ccccdc;letter-spacing:-3.150px"><span style="margin:0 -0.06em 0 -0.03em">1</span>.3<span style="margin:0 -0.06em 0 -0.03em">1</span></div>
<div class="t" style="left:804.50px;top:479.56px;font-size:18.00px;color:#ccccdc;letter-spacing:0.000px">%</div>
<div class="panel" style="left:858px;top:290px;width:556px;height:220px"></div>
<div class="t" style="left:866.8px;top:300.00px;font-size:15px;color:#ccccdc;font-weight:normal;letter-spacing:0.15px;-webkit-text-stroke:0.25px #ccccdc">Memory Usage Percentage</div>
<div class="t" style="right:1346.8px;top:341.00px;font-size:13.5px;color:#ccccdc;font-weight:normal;letter-spacing:0.7px">node-0</div>
<div class="cell" style="left:927px;top:331px;width:10px;height:32px;background:radial-gradient(ellipse at center,#6fbd66 0%,#64a95c 65%,#578f51 100%)"></div>
<div class="cell" style="left:939px;top:331px;width:10px;height:32px;background:rgba(115,191,105,0.18)"></div>
<div class="cell" style="left:951px;top:331px;width:10px;height:32px;background:rgba(115,191,105,0.18)"></div>
<div class="cell" style="left:963px;top:331px;width:10px;height:32px;background:rgba(115,191,105,0.18)"></div>
<div class="cell" style="left:975px;top:331px;width:10px;height:32px;background:rgba(115,191,105,0.18)"></div>
<div class="cell" style="left:987px;top:331px;width:10px;height:32px;background:rgba(115,191,105,0.18)"></div>
<div class="cell" style="left:999px;top:331px;width:10px;height:32px;background:rgba(115,191,105,0.18)"></div>
<div class="cell" style="left:1011px;top:331px;width:10px;height:32px;background:rgba(115,191,105,0.18)"></div>
<div class="cell" style="left:1023px;top:331px;width:10px;height:32px;background:rgba(115,191,105,0.18)"></div>
<div class="cell" style="left:1035px;top:331px;width:10px;height:32px;background:rgba(115,191,105,0.18)"></div>
<div class="cell" style="left:1047px;top:331px;width:10px;height:32px;background:rgba(115,191,105,0.18)"></div>
<div class="cell" style="left:1059px;top:331px;width:10px;height:32px;background:rgba(115,191,105,0.18)"></div>
<div class="cell" style="left:1071px;top:331px;width:10px;height:32px;background:rgba(115,191,105,0.18)"></div>
<div class="cell" style="left:1083px;top:331px;width:10px;height:32px;background:rgba(115,191,105,0.18)"></div>
<div class="cell" style="left:1095px;top:331px;width:10px;height:32px;background:rgba(115,191,105,0.18)"></div>
<div class="cell" style="left:1107px;top:331px;width:10px;height:32px;background:rgba(115,191,105,0.18)"></div>
<div class="cell" style="left:1119px;top:331px;width:10px;height:32px;background:rgba(115,191,105,0.18)"></div>
<div class="cell" style="left:1131px;top:331px;width:10px;height:32px;background:rgba(115,191,105,0.18)"></div>
<div class="cell" style="left:1143px;top:331px;width:10px;height:32px;background:rgba(115,191,105,0.18)"></div>
<div class="cell" style="left:1155px;top:331px;width:10px;height:32px;background:rgba(115,191,105,0.18)"></div>
<div class="cell" style="left:1167px;top:331px;width:10px;height:32px;background:rgba(115,191,105,0.18)"></div>
<div class="cell" style="left:1179px;top:331px;width:10px;height:32px;background:rgba(115,191,105,0.18)"></div>
<div class="cell" style="left:1191px;top:331px;width:10px;height:32px;background:rgba(115,191,105,0.18)"></div>
<div class="cell" style="left:1203px;top:331px;width:10px;height:32px;background:rgba(115,191,105,0.18)"></div>
<div class="cell" style="left:1215px;top:331px;width:10px;height:32px;background:rgba(115,191,105,0.18)"></div>
<div class="cell" style="left:1227px;top:331px;width:10px;height:32px;background:rgba(115,191,105,0.18)"></div>
<div class="cell" style="left:1239px;top:331px;width:10px;height:32px;background:rgba(250,222,42,0.18)"></div>
<div class="cell" style="left:1251px;top:331px;width:10px;height:32px;background:rgba(250,222,42,0.18)"></div>
<div class="cell" style="left:1263px;top:331px;width:10px;height:32px;background:rgba(250,222,42,0.18)"></div>
<div class="cell" style="left:1275px;top:331px;width:10px;height:32px;background:rgba(242,73,92,0.18)"></div>
<div class="t" style="left:1311.35px;top:330.31px;font-size:32.00px;color:#73bf69;letter-spacing:-1.650px">2.95</div>
<div class="t" style="left:1369.65px;top:342.16px;font-size:18.00px;color:#73bf69;letter-spacing:0.000px">%</div>
<div class="t" style="right:1346.8px;top:375.00px;font-size:13.5px;color:#ccccdc;font-weight:normal;letter-spacing:0.7px">node-1</div>
<div class="cell" style="left:927px;top:365px;width:10px;height:32px;background:radial-gradient(ellipse at center,#6fbd66 0%,#64a95c 65%,#578f51 100%)"></div>
<div class="cell" style="left:939px;top:365px;width:10px;height:32px;background:rgba(115,191,105,0.18)"></div>
<div class="cell" style="left:951px;top:365px;width:10px;height:32px;background:rgba(115,191,105,0.18)"></div>
<div class="cell" style="left:963px;top:365px;width:10px;height:32px;background:rgba(115,191,105,0.18)"></div>
<div class="cell" style="left:975px;top:365px;width:10px;height:32px;background:rgba(115,191,105,0.18)"></div>
<div class="cell" style="left:987px;top:365px;width:10px;height:32px;background:rgba(115,191,105,0.18)"></div>
<div class="cell" style="left:999px;top:365px;width:10px;height:32px;background:rgba(115,191,105,0.18)"></div>
<div class="cell" style="left:1011px;top:365px;width:10px;height:32px;background:rgba(115,191,105,0.18)"></div>
<div class="cell" style="left:1023px;top:365px;width:10px;height:32px;background:rgba(115,191,105,0.18)"></div>
<div class="cell" style="left:1035px;top:365px;width:10px;height:32px;background:rgba(115,191,105,0.18)"></div>
<div class="cell" style="left:1047px;top:365px;width:10px;height:32px;background:rgba(115,191,105,0.18)"></div>
<div class="cell" style="left:1059px;top:365px;width:10px;height:32px;background:rgba(115,191,105,0.18)"></div>
<div class="cell" style="left:1071px;top:365px;width:10px;height:32px;background:rgba(115,191,105,0.18)"></div>
<div class="cell" style="left:1083px;top:365px;width:10px;height:32px;background:rgba(115,191,105,0.18)"></div>
<div class="cell" style="left:1095px;top:365px;width:10px;height:32px;background:rgba(115,191,105,0.18)"></div>
<div class="cell" style="left:1107px;top:365px;width:10px;height:32px;background:rgba(115,191,105,0.18)"></div>
<div class="cell" style="left:1119px;top:365px;width:10px;height:32px;background:rgba(115,191,105,0.18)"></div>
<div class="cell" style="left:1131px;top:365px;width:10px;height:32px;background:rgba(115,191,105,0.18)"></div>
<div class="cell" style="left:1143px;top:365px;width:10px;height:32px;background:rgba(115,191,105,0.18)"></div>
<div class="cell" style="left:1155px;top:365px;width:10px;height:32px;background:rgba(115,191,105,0.18)"></div>
<div class="cell" style="left:1167px;top:365px;width:10px;height:32px;background:rgba(115,191,105,0.18)"></div>
<div class="cell" style="left:1179px;top:365px;width:10px;height:32px;background:rgba(115,191,105,0.18)"></div>
<div class="cell" style="left:1191px;top:365px;width:10px;height:32px;background:rgba(115,191,105,0.18)"></div>
<div class="cell" style="left:1203px;top:365px;width:10px;height:32px;background:rgba(115,191,105,0.18)"></div>
<div class="cell" style="left:1215px;top:365px;width:10px;height:32px;background:rgba(115,191,105,0.18)"></div>
<div class="cell" style="left:1227px;top:365px;width:10px;height:32px;background:rgba(115,191,105,0.18)"></div>
<div class="cell" style="left:1239px;top:365px;width:10px;height:32px;background:rgba(250,222,42,0.18)"></div>
<div class="cell" style="left:1251px;top:365px;width:10px;height:32px;background:rgba(250,222,42,0.18)"></div>
<div class="cell" style="left:1263px;top:365px;width:10px;height:32px;background:rgba(250,222,42,0.18)"></div>
<div class="cell" style="left:1275px;top:365px;width:10px;height:32px;background:rgba(242,73,92,0.18)"></div>
<div class="t" style="left:1311.35px;top:364.31px;font-size:32.00px;color:#73bf69;letter-spacing:-1.650px">2.66</div>
<div class="t" style="left:1369.65px;top:376.16px;font-size:18.00px;color:#73bf69;letter-spacing:0.000px">%</div>
<div class="t" style="right:1346.8px;top:410.00px;font-size:13.5px;color:#ccccdc;font-weight:normal;letter-spacing:0.7px">node-2</div>
<div class="cell" style="left:927px;top:400px;width:10px;height:32px;background:radial-gradient(ellipse at center,#6fbd66 0%,#64a95c 65%,#578f51 100%)"></div>
<div class="cell" style="left:939px;top:400px;width:10px;height:32px;background:rgba(115,191,105,0.18)"></div>
<div class="cell" style="left:951px;top:400px;width:10px;height:32px;background:rgba(115,191,105,0.18)"></div>
<div class="cell" style="left:963px;top:400px;width:10px;height:32px;background:rgba(115,191,105,0.18)"></div>
<div class="cell" style="left:975px;top:400px;width:10px;height:32px;background:rgba(115,191,105,0.18)"></div>
<div class="cell" style="left:987px;top:400px;width:10px;height:32px;background:rgba(115,191,105,0.18)"></div>
<div class="cell" style="left:999px;top:400px;width:10px;height:32px;background:rgba(115,191,105,0.18)"></div>
<div class="cell" style="left:1011px;top:400px;width:10px;height:32px;background:rgba(115,191,105,0.18)"></div>
<div class="cell" style="left:1023px;top:400px;width:10px;height:32px;background:rgba(115,191,105,0.18)"></div>
<div class="cell" style="left:1035px;top:400px;width:10px;height:32px;background:rgba(115,191,105,0.18)"></div>
<div class="cell" style="left:1047px;top:400px;width:10px;height:32px;background:rgba(115,191,105,0.18)"></div>
<div class="cell" style="left:1059px;top:400px;width:10px;height:32px;background:rgba(115,191,105,0.18)"></div>
<div class="cell" style="left:1071px;top:400px;width:10px;height:32px;background:rgba(115,191,105,0.18)"></div>
<div class="cell" style="left:1083px;top:400px;width:10px;height:32px;background:rgba(115,191,105,0.18)"></div>
<div class="cell" style="left:1095px;top:400px;width:10px;height:32px;background:rgba(115,191,105,0.18)"></div>
<div class="cell" style="left:1107px;top:400px;width:10px;height:32px;background:rgba(115,191,105,0.18)"></div>
<div class="cell" style="left:1119px;top:400px;width:10px;height:32px;background:rgba(115,191,105,0.18)"></div>
<div class="cell" style="left:1131px;top:400px;width:10px;height:32px;background:rgba(115,191,105,0.18)"></div>
<div class="cell" style="left:1143px;top:400px;width:10px;height:32px;background:rgba(115,191,105,0.18)"></div>
<div class="cell" style="left:1155px;top:400px;width:10px;height:32px;background:rgba(115,191,105,0.18)"></div>
<div class="cell" style="left:1167px;top:400px;width:10px;height:32px;background:rgba(115,191,105,0.18)"></div>
<div class="cell" style="left:1179px;top:400px;width:10px;height:32px;background:rgba(115,191,105,0.18)"></div>
<div class="cell" style="left:1191px;top:400px;width:10px;height:32px;background:rgba(115,191,105,0.18)"></div>
<div class="cell" style="left:1203px;top:400px;width:10px;height:32px;background:rgba(115,191,105,0.18)"></div>
<div class="cell" style="left:1215px;top:400px;width:10px;height:32px;background:rgba(115,191,105,0.18)"></div>
<div class="cell" style="left:1227px;top:400px;width:10px;height:32px;background:rgba(115,191,105,0.18)"></div>
<div class="cell" style="left:1239px;top:400px;width:10px;height:32px;background:rgba(250,222,42,0.18)"></div>
<div class="cell" style="left:1251px;top:400px;width:10px;height:32px;background:rgba(250,222,42,0.18)"></div>
<div class="cell" style="left:1263px;top:400px;width:10px;height:32px;background:rgba(250,222,42,0.18)"></div>
<div class="cell" style="left:1275px;top:400px;width:10px;height:32px;background:rgba(242,73,92,0.18)"></div>
<div class="t" style="left:1318.00px;top:399.46px;font-size:32.00px;color:#73bf69;letter-spacing:-3.600px">2.7<span style="margin:0 -0.06em 0 -0.03em">1</span></div>
<div class="t" style="left:1369.65px;top:411.31px;font-size:18.00px;color:#73bf69;letter-spacing:0.000px">%</div>
<div class="t" style="right:1346.8px;top:444.00px;font-size:13.5px;color:#ccccdc;font-weight:normal;letter-spacing:0.7px">node-3</div>
<div class="cell" style="left:927px;top:434px;width:10px;height:32px;background:radial-gradient(ellipse at center,#6fbd66 0%,#64a95c 65%,#578f51 100%)"></div>
<div class="cell" style="left:939px;top:434px;width:10px;height:32px;background:radial-gradient(ellipse at center,#6fbd66 0%,#64a95c 65%,#578f51 100%)"></div>
<div class="cell" style="left:951px;top:434px;width:10px;height:32px;background:rgba(115,191,105,0.18)"></div>
<div class="cell" style="left:963px;top:434px;width:10px;height:32px;background:rgba(115,191,105,0.18)"></div>
<div class="cell" style="left:975px;top:434px;width:10px;height:32px;background:rgba(115,191,105,0.18)"></div>
<div class="cell" style="left:987px;top:434px;width:10px;height:32px;background:rgba(115,191,105,0.18)"></div>
<div class="cell" style="left:999px;top:434px;width:10px;height:32px;background:rgba(115,191,105,0.18)"></div>
<div class="cell" style="left:1011px;top:434px;width:10px;height:32px;background:rgba(115,191,105,0.18)"></div>
<div class="cell" style="left:1023px;top:434px;width:10px;height:32px;background:rgba(115,191,105,0.18)"></div>
<div class="cell" style="left:1035px;top:434px;width:10px;height:32px;background:rgba(115,191,105,0.18)"></div>
<div class="cell" style="left:1047px;top:434px;width:10px;height:32px;background:rgba(115,191,105,0.18)"></div>
<div class="cell" style="left:1059px;top:434px;width:10px;height:32px;background:rgba(115,191,105,0.18)"></div>
<div class="cell" style="left:1071px;top:434px;width:10px;height:32px;background:rgba(115,191,105,0.18)"></div>
<div class="cell" style="left:1083px;top:434px;width:10px;height:32px;background:rgba(115,191,105,0.18)"></div>
<div class="cell" style="left:1095px;top:434px;width:10px;height:32px;background:rgba(115,191,105,0.18)"></div>
<div class="cell" style="left:1107px;top:434px;width:10px;height:32px;background:rgba(115,191,105,0.18)"></div>
<div class="cell" style="left:1119px;top:434px;width:10px;height:32px;background:rgba(115,191,105,0.18)"></div>
<div class="cell" style="left:1131px;top:434px;width:10px;height:32px;background:rgba(115,191,105,0.18)"></div>
<div class="cell" style="left:1143px;top:434px;width:10px;height:32px;background:rgba(115,191,105,0.18)"></div>
<div class="cell" style="left:1155px;top:434px;width:10px;height:32px;background:rgba(115,191,105,0.18)"></div>
<div class="cell" style="left:1167px;top:434px;width:10px;height:32px;background:rgba(115,191,105,0.18)"></div>
<div class="cell" style="left:1179px;top:434px;width:10px;height:32px;background:rgba(115,191,105,0.18)"></div>
<div class="cell" style="left:1191px;top:434px;width:10px;height:32px;background:rgba(115,191,105,0.18)"></div>
<div class="cell" style="left:1203px;top:434px;width:10px;height:32px;background:rgba(115,191,105,0.18)"></div>
<div class="cell" style="left:1215px;top:434px;width:10px;height:32px;background:rgba(115,191,105,0.18)"></div>
<div class="cell" style="left:1227px;top:434px;width:10px;height:32px;background:rgba(115,191,105,0.18)"></div>
<div class="cell" style="left:1239px;top:434px;width:10px;height:32px;background:rgba(250,222,42,0.18)"></div>
<div class="cell" style="left:1251px;top:434px;width:10px;height:32px;background:rgba(250,222,42,0.18)"></div>
<div class="cell" style="left:1263px;top:434px;width:10px;height:32px;background:rgba(250,222,42,0.18)"></div>
<div class="cell" style="left:1275px;top:434px;width:10px;height:32px;background:rgba(242,73,92,0.18)"></div>
<div class="t" style="left:1311.10px;top:433.46px;font-size:32.00px;color:#73bf69;letter-spacing:-1.800px">3.90</div>
<div class="t" style="left:1369.65px;top:445.31px;font-size:18.00px;color:#73bf69;letter-spacing:0.000px">%</div>
<div class="t" style="right:1346.8px;top:479.00px;font-size:13.5px;color:#ccccdc;font-weight:normal;letter-spacing:0.7px">node-4</div>
<div class="cell" style="left:927px;top:469px;width:10px;height:32px;background:radial-gradient(ellipse at center,#6fbd66 0%,#64a95c 65%,#578f51 100%)"></div>
<div class="cell" style="left:939px;top:469px;width:10px;height:32px;background:rgba(115,191,105,0.18)"></div>
<div class="cell" style="left:951px;top:469px;width:10px;height:32px;background:rgba(115,191,105,0.18)"></div>
<div class="cell" style="left:963px;top:469px;width:10px;height:32px;background:rgba(115,191,105,0.18)"></div>
<div class="cell" style="left:975px;top:469px;width:10px;height:32px;background:rgba(115,191,105,0.18)"></div>
<div class="cell" style="left:987px;top:469px;width:10px;height:32px;background:rgba(115,191,105,0.18)"></div>
<div class="cell" style="left:999px;top:469px;width:10px;height:32px;background:rgba(115,191,105,0.18)"></div>
<div class="cell" style="left:1011px;top:469px;width:10px;height:32px;background:rgba(115,191,105,0.18)"></div>
<div class="cell" style="left:1023px;top:469px;width:10px;height:32px;background:rgba(115,191,105,0.18)"></div>
<div class="cell" style="left:1035px;top:469px;width:10px;height:32px;background:rgba(115,191,105,0.18)"></div>
<div class="cell" style="left:1047px;top:469px;width:10px;height:32px;background:rgba(115,191,105,0.18)"></div>
<div class="cell" style="left:1059px;top:469px;width:10px;height:32px;background:rgba(115,191,105,0.18)"></div>
<div class="cell" style="left:1071px;top:469px;width:10px;height:32px;background:rgba(115,191,105,0.18)"></div>
<div class="cell" style="left:1083px;top:469px;width:10px;height:32px;background:rgba(115,191,105,0.18)"></div>
<div class="cell" style="left:1095px;top:469px;width:10px;height:32px;background:rgba(115,191,105,0.18)"></div>
<div class="cell" style="left:1107px;top:469px;width:10px;height:32px;background:rgba(115,191,105,0.18)"></div>
<div class="cell" style="left:1119px;top:469px;width:10px;height:32px;background:rgba(115,191,105,0.18)"></div>
<div class="cell" style="left:1131px;top:469px;width:10px;height:32px;background:rgba(115,191,105,0.18)"></div>
<div class="cell" style="left:1143px;top:469px;width:10px;height:32px;background:rgba(115,191,105,0.18)"></div>
<div class="cell" style="left:1155px;top:469px;width:10px;height:32px;background:rgba(115,191,105,0.18)"></div>
<div class="cell" style="left:1167px;top:469px;width:10px;height:32px;background:rgba(115,191,105,0.18)"></div>
<div class="cell" style="left:1179px;top:469px;width:10px;height:32px;background:rgba(115,191,105,0.18)"></div>
<div class="cell" style="left:1191px;top:469px;width:10px;height:32px;background:rgba(115,191,105,0.18)"></div>
<div class="cell" style="left:1203px;top:469px;width:10px;height:32px;background:rgba(115,191,105,0.18)"></div>
<div class="cell" style="left:1215px;top:469px;width:10px;height:32px;background:rgba(115,191,105,0.18)"></div>
<div class="cell" style="left:1227px;top:469px;width:10px;height:32px;background:rgba(115,191,105,0.18)"></div>
<div class="cell" style="left:1239px;top:469px;width:10px;height:32px;background:rgba(250,222,42,0.18)"></div>
<div class="cell" style="left:1251px;top:469px;width:10px;height:32px;background:rgba(250,222,42,0.18)"></div>
<div class="cell" style="left:1263px;top:469px;width:10px;height:32px;background:rgba(250,222,42,0.18)"></div>
<div class="cell" style="left:1275px;top:469px;width:10px;height:32px;background:rgba(242,73,92,0.18)"></div>
<div class="t" style="left:1317.15px;top:466.91px;font-size:32.00px;color:#73bf69;letter-spacing:-3.150px">2.6<span style="margin:0 -0.06em 0 -0.03em">1</span></div>
<div class="t" style="left:1369.65px;top:478.76px;font-size:18.00px;color:#73bf69;letter-spacing:0.000px">%</div>
<div class="panel" style="left:1421px;top:290px;width:556px;height:220px"></div>
<div class="t" style="left:1429.8px;top:300.00px;font-size:15px;color:#ccccdc;font-weight:normal;letter-spacing:0.15px;-webkit-text-stroke:0.25px #ccccdc">Storage Usage Percentage</div>
<div class="t" style="right:784.8px;top:341.00px;font-size:13.5px;color:#ccccdc;font-weight:normal;letter-spacing:0.7px">node-2</div>
<div class="cell" style="left:1490px;top:331px;width:10px;height:32px;background:radial-gradient(ellipse at center,#6fbd66 0%,#64a95c 65%,#578f51 100%)"></div>
<div class="cell" style="left:1502px;top:331px;width:10px;height:32px;background:rgba(115,191,105,0.18)"></div>
<div class="cell" style="left:1514px;top:331px;width:10px;height:32px;background:rgba(115,191,105,0.18)"></div>
<div class="cell" style="left:1526px;top:331px;width:10px;height:32px;background:rgba(115,191,105,0.18)"></div>
<div class="cell" style="left:1538px;top:331px;width:10px;height:32px;background:rgba(115,191,105,0.18)"></div>
<div class="cell" style="left:1550px;top:331px;width:10px;height:32px;background:rgba(115,191,105,0.18)"></div>
<div class="cell" style="left:1562px;top:331px;width:10px;height:32px;background:rgba(115,191,105,0.18)"></div>
<div class="cell" style="left:1574px;top:331px;width:10px;height:32px;background:rgba(115,191,105,0.18)"></div>
<div class="cell" style="left:1586px;top:331px;width:10px;height:32px;background:rgba(115,191,105,0.18)"></div>
<div class="cell" style="left:1598px;top:331px;width:10px;height:32px;background:rgba(115,191,105,0.18)"></div>
<div class="cell" style="left:1610px;top:331px;width:10px;height:32px;background:rgba(115,191,105,0.18)"></div>
<div class="cell" style="left:1622px;top:331px;width:10px;height:32px;background:rgba(115,191,105,0.18)"></div>
<div class="cell" style="left:1634px;top:331px;width:10px;height:32px;background:rgba(115,191,105,0.18)"></div>
<div class="cell" style="left:1646px;top:331px;width:10px;height:32px;background:rgba(115,191,105,0.18)"></div>
<div class="cell" style="left:1658px;top:331px;width:10px;height:32px;background:rgba(115,191,105,0.18)"></div>
<div class="cell" style="left:1670px;top:331px;width:10px;height:32px;background:rgba(115,191,105,0.18)"></div>
<div class="cell" style="left:1682px;top:331px;width:10px;height:32px;background:rgba(115,191,105,0.18)"></div>
<div class="cell" style="left:1694px;top:331px;width:10px;height:32px;background:rgba(115,191,105,0.18)"></div>
<div class="cell" style="left:1706px;top:331px;width:10px;height:32px;background:rgba(115,191,105,0.18)"></div>
<div class="cell" style="left:1718px;top:331px;width:10px;height:32px;background:rgba(115,191,105,0.18)"></div>
<div class="cell" style="left:1730px;top:331px;width:10px;height:32px;background:rgba(115,191,105,0.18)"></div>
<div class="cell" style="left:1742px;top:331px;width:10px;height:32px;background:rgba(115,191,105,0.18)"></div>
<div class="cell" style="left:1754px;top:331px;width:10px;height:32px;background:rgba(115,191,105,0.18)"></div>
<div class="cell" style="left:1766px;top:331px;width:10px;height:32px;background:rgba(115,191,105,0.18)"></div>
<div class="cell" style="left:1778px;top:331px;width:10px;height:32px;background:rgba(250,222,42,0.18)"></div>
<div class="cell" style="left:1790px;top:331px;width:10px;height:32px;background:rgba(250,222,42,0.18)"></div>
<div class="cell" style="left:1802px;top:331px;width:10px;height:32px;background:rgba(250,222,42,0.18)"></div>
<div class="cell" style="left:1814px;top:331px;width:10px;height:32px;background:rgba(242,73,92,0.18)"></div>
<div class="cell" style="left:1826px;top:331px;width:10px;height:32px;background:rgba(242,73,92,0.18)"></div>
<div class="cell" style="left:1838px;top:331px;width:10px;height:32px;background:rgba(242,73,92,0.18)"></div>
<div class="t" style="left:1875.09px;top:338.39px;font-size:19.50px;color:#73bf69;letter-spacing:1.008px">0.269%</div>
<div class="t" style="right:784.8px;top:375.00px;font-size:13.5px;color:#ccccdc;font-weight:normal;letter-spacing:0.7px">node-0</div>
<div class="cell" style="left:1490px;top:365px;width:10px;height:32px;background:radial-gradient(ellipse at center,#6fbd66 0%,#64a95c 65%,#578f51 100%)"></div>
<div class="cell" style="left:1502px;top:365px;width:10px;height:32px;background:rgba(115,191,105,0.18)"></div>
<div class="cell" style="left:1514px;top:365px;width:10px;height:32px;background:rgba(115,191,105,0.18)"></div>
<div class="cell" style="left:1526px;top:365px;width:10px;height:32px;background:rgba(115,191,105,0.18)"></div>
<div class="cell" style="left:1538px;top:365px;width:10px;height:32px;background:rgba(115,191,105,0.18)"></div>
<div class="cell" style="left:1550px;top:365px;width:10px;height:32px;background:rgba(115,191,105,0.18)"></div>
<div class="cell" style="left:1562px;top:365px;width:10px;height:32px;background:rgba(115,191,105,0.18)"></div>
<div class="cell" style="left:1574px;top:365px;width:10px;height:32px;background:rgba(115,191,105,0.18)"></div>
<div class="cell" style="left:1586px;top:365px;width:10px;height:32px;background:rgba(115,191,105,0.18)"></div>
<div class="cell" style="left:1598px;top:365px;width:10px;height:32px;background:rgba(115,191,105,0.18)"></div>
<div class="cell" style="left:1610px;top:365px;width:10px;height:32px;background:rgba(115,191,105,0.18)"></div>
<div class="cell" style="left:1622px;top:365px;width:10px;height:32px;background:rgba(115,191,105,0.18)"></div>
<div class="cell" style="left:1634px;top:365px;width:10px;height:32px;background:rgba(115,191,105,0.18)"></div>
<div class="cell" style="left:1646px;top:365px;width:10px;height:32px;background:rgba(115,191,105,0.18)"></div>
<div class="cell" style="left:1658px;top:365px;width:10px;height:32px;background:rgba(115,191,105,0.18)"></div>
<div class="cell" style="left:1670px;top:365px;width:10px;height:32px;background:rgba(115,191,105,0.18)"></div>
<div class="cell" style="left:1682px;top:365px;width:10px;height:32px;background:rgba(115,191,105,0.18)"></div>
<div class="cell" style="left:1694px;top:365px;width:10px;height:32px;background:rgba(115,191,105,0.18)"></div>
<div class="cell" style="left:1706px;top:365px;width:10px;height:32px;background:rgba(115,191,105,0.18)"></div>
<div class="cell" style="left:1718px;top:365px;width:10px;height:32px;background:rgba(115,191,105,0.18)"></div>
<div class="cell" style="left:1730px;top:365px;width:10px;height:32px;background:rgba(115,191,105,0.18)"></div>
<div class="cell" style="left:1742px;top:365px;width:10px;height:32px;background:rgba(115,191,105,0.18)"></div>
<div class="cell" style="left:1754px;top:365px;width:10px;height:32px;background:rgba(115,191,105,0.18)"></div>
<div class="cell" style="left:1766px;top:365px;width:10px;height:32px;background:rgba(115,191,105,0.18)"></div>
<div class="cell" style="left:1778px;top:365px;width:10px;height:32px;background:rgba(250,222,42,0.18)"></div>
<div class="cell" style="left:1790px;top:365px;width:10px;height:32px;background:rgba(250,222,42,0.18)"></div>
<div class="cell" style="left:1802px;top:365px;width:10px;height:32px;background:rgba(250,222,42,0.18)"></div>
<div class="cell" style="left:1814px;top:365px;width:10px;height:32px;background:rgba(242,73,92,0.18)"></div>
<div class="cell" style="left:1826px;top:365px;width:10px;height:32px;background:rgba(242,73,92,0.18)"></div>
<div class="cell" style="left:1838px;top:365px;width:10px;height:32px;background:rgba(242,73,92,0.18)"></div>
<div class="t" style="left:1875.09px;top:372.45px;font-size:19.50px;color:#73bf69;letter-spacing:1.008px">0.280%</div>
<div class="t" style="right:784.8px;top:410.00px;font-size:13.5px;color:#ccccdc;font-weight:normal;letter-spacing:0.7px">node-1</div>
<div class="cell" style="left:1490px;top:400px;width:10px;height:32px;background:radial-gradient(ellipse at center,#6fbd66 0%,#64a95c 65%,#578f51 100%)"></div>
<div class="cell" style="left:1502px;top:400px;width:10px;height:32px;background:rgba(115,191,105,0.18)"></div>
<div class="cell" style="left:1514px;top:400px;width:10px;height:32px;background:rgba(115,191,105,0.18)"></div>
<div class="cell" style="left:1526px;top:400px;width:10px;height:32px;background:rgba(115,191,105,0.18)"></div>
<div class="cell" style="left:1538px;top:400px;width:10px;height:32px;background:rgba(115,191,105,0.18)"></div>
<div class="cell" style="left:1550px;top:400px;width:10px;height:32px;background:rgba(115,191,105,0.18)"></div>
<div class="cell" style="left:1562px;top:400px;width:10px;height:32px;background:rgba(115,191,105,0.18)"></div>
<div class="cell" style="left:1574px;top:400px;width:10px;height:32px;background:rgba(115,191,105,0.18)"></div>
<div class="cell" style="left:1586px;top:400px;width:10px;height:32px;background:rgba(115,191,105,0.18)"></div>
<div class="cell" style="left:1598px;top:400px;width:10px;height:32px;background:rgba(115,191,105,0.18)"></div>
<div class="cell" style="left:1610px;top:400px;width:10px;height:32px;background:rgba(115,191,105,0.18)"></div>
<div class="cell" style="left:1622px;top:400px;width:10px;height:32px;background:rgba(115,191,105,0.18)"></div>
<div class="cell" style="left:1634px;top:400px;width:10px;height:32px;background:rgba(115,191,105,0.18)"></div>
<div class="cell" style="left:1646px;top:400px;width:10px;height:32px;background:rgba(115,191,105,0.18)"></div>
<div class="cell" style="left:1658px;top:400px;width:10px;height:32px;background:rgba(115,191,105,0.18)"></div>
<div class="cell" style="left:1670px;top:400px;width:10px;height:32px;background:rgba(115,191,105,0.18)"></div>
<div class="cell" style="left:1682px;top:400px;width:10px;height:32px;background:rgba(115,191,105,0.18)"></div>
<div class="cell" style="left:1694px;top:400px;width:10px;height:32px;background:rgba(115,191,105,0.18)"></div>
<div class="cell" style="left:1706px;top:400px;width:10px;height:32px;background:rgba(115,191,105,0.18)"></div>
<div class="cell" style="left:1718px;top:400px;width:10px;height:32px;background:rgba(115,191,105,0.18)"></div>
<div class="cell" style="left:1730px;top:400px;width:10px;height:32px;background:rgba(115,191,105,0.18)"></div>
<div class="cell" style="left:1742px;top:400px;width:10px;height:32px;background:rgba(115,191,105,0.18)"></div>
<div class="cell" style="left:1754px;top:400px;width:10px;height:32px;background:rgba(115,191,105,0.18)"></div>
<div class="cell" style="left:1766px;top:400px;width:10px;height:32px;background:rgba(115,191,105,0.18)"></div>
<div class="cell" style="left:1778px;top:400px;width:10px;height:32px;background:rgba(250,222,42,0.18)"></div>
<div class="cell" style="left:1790px;top:400px;width:10px;height:32px;background:rgba(250,222,42,0.18)"></div>
<div class="cell" style="left:1802px;top:400px;width:10px;height:32px;background:rgba(250,222,42,0.18)"></div>
<div class="cell" style="left:1814px;top:400px;width:10px;height:32px;background:rgba(242,73,92,0.18)"></div>
<div class="cell" style="left:1826px;top:400px;width:10px;height:32px;background:rgba(242,73,92,0.18)"></div>
<div class="cell" style="left:1838px;top:400px;width:10px;height:32px;background:rgba(242,73,92,0.18)"></div>
<div class="t" style="left:1863.12px;top:407.39px;font-size:19.50px;color:#73bf69;letter-spacing:1.035px">0.0933%</div>
<div class="t" style="right:784.8px;top:444.00px;font-size:13.5px;color:#ccccdc;font-weight:normal;letter-spacing:0.7px">node-4</div>
<div class="cell" style="left:1490px;top:434px;width:10px;height:32px;background:radial-gradient(ellipse at center,#6fbd66 0%,#64a95c 65%,#578f51 100%)"></div>
<div class="cell" style="left:1502px;top:434px;width:10px;height:32px;background:rgba(115,191,105,0.18)"></div>
<div class="cell" style="left:1514px;top:434px;width:10px;height:32px;background:rgba(115,191,105,0.18)"></div>
<div class="cell" style="left:1526px;top:434px;width:10px;height:32px;background:rgba(115,191,105,0.18)"></div>
<div class="cell" style="left:1538px;top:434px;width:10px;height:32px;background:rgba(115,191,105,0.18)"></div>
<div class="cell" style="left:1550px;top:434px;width:10px;height:32px;background:rgba(115,191,105,0.18)"></div>
<div class="cell" style="left:1562px;top:434px;width:10px;height:32px;background:rgba(115,191,105,0.18)"></div>
<div class="cell" style="left:1574px;top:434px;width:10px;height:32px;background:rgba(115,191,105,0.18)"></div>
<div class="cell" style="left:1586px;top:434px;width:10px;height:32px;background:rgba(115,191,105,0.18)"></div>
<div class="cell" style="left:1598px;top:434px;width:10px;height:32px;background:rgba(115,191,105,0.18)"></div>
<div class="cell" style="left:1610px;top:434px;width:10px;height:32px;background:rgba(115,191,105,0.18)"></div>
<div class="cell" style="left:1622px;top:434px;width:10px;height:32px;background:rgba(115,191,105,0.18)"></div>
<div class="cell" style="left:1634px;top:434px;width:10px;height:32px;background:rgba(115,191,105,0.18)"></div>
<div class="cell" style="left:1646px;top:434px;width:10px;height:32px;background:rgba(115,191,105,0.18)"></div>
<div class="cell" style="left:1658px;top:434px;width:10px;height:32px;background:rgba(115,191,105,0.18)"></div>
<div class="cell" style="left:1670px;top:434px;width:10px;height:32px;background:rgba(115,191,105,0.18)"></div>
<div class="cell" style="left:1682px;top:434px;width:10px;height:32px;background:rgba(115,191,105,0.18)"></div>
<div class="cell" style="left:1694px;top:434px;width:10px;height:32px;background:rgba(115,191,105,0.18)"></div>
<div class="cell" style="left:1706px;top:434px;width:10px;height:32px;background:rgba(115,191,105,0.18)"></div>
<div class="cell" style="left:1718px;top:434px;width:10px;height:32px;background:rgba(115,191,105,0.18)"></div>
<div class="cell" style="left:1730px;top:434px;width:10px;height:32px;background:rgba(115,191,105,0.18)"></div>
<div class="cell" style="left:1742px;top:434px;width:10px;height:32px;background:rgba(115,191,105,0.18)"></div>
<div class="cell" style="left:1754px;top:434px;width:10px;height:32px;background:rgba(115,191,105,0.18)"></div>
<div class="cell" style="left:1766px;top:434px;width:10px;height:32px;background:rgba(115,191,105,0.18)"></div>
<div class="cell" style="left:1778px;top:434px;width:10px;height:32px;background:rgba(250,222,42,0.18)"></div>
<div class="cell" style="left:1790px;top:434px;width:10px;height:32px;background:rgba(250,222,42,0.18)"></div>
<div class="cell" style="left:1802px;top:434px;width:10px;height:32px;background:rgba(250,222,42,0.18)"></div>
<div class="cell" style="left:1814px;top:434px;width:10px;height:32px;background:rgba(242,73,92,0.18)"></div>
<div class="cell" style="left:1826px;top:434px;width:10px;height:32px;background:rgba(242,73,92,0.18)"></div>
<div class="cell" style="left:1838px;top:434px;width:10px;height:32px;background:rgba(242,73,92,0.18)"></div>
<div class="t" style="left:1875.12px;top:440.48px;font-size:19.50px;color:#73bf69;letter-spacing:0.882px">0.282%</div>
<div class="t" style="right:784.8px;top:479.00px;font-size:13.5px;color:#ccccdc;font-weight:normal;letter-spacing:0.7px">node-3</div>
<div class="cell" style="left:1490px;top:469px;width:10px;height:32px;background:radial-gradient(ellipse at center,#6fbd66 0%,#64a95c 65%,#578f51 100%)"></div>
<div class="cell" style="left:1502px;top:469px;width:10px;height:32px;background:radial-gradient(ellipse at center,#6fbd66 0%,#64a95c 65%,#578f51 100%)"></div>
<div class="cell" style="left:1514px;top:469px;width:10px;height:32px;background:rgba(115,191,105,0.18)"></div>
<div class="cell" style="left:1526px;top:469px;width:10px;height:32px;background:rgba(115,191,105,0.18)"></div>
<div class="cell" style="left:1538px;top:469px;width:10px;height:32px;background:rgba(115,191,105,0.18)"></div>
<div class="cell" style="left:1550px;top:469px;width:10px;height:32px;background:rgba(115,191,105,0.18)"></div>
<div class="cell" style="left:1562px;top:469px;width:10px;height:32px;background:rgba(115,191,105,0.18)"></div>
<div class="cell" style="left:1574px;top:469px;width:10px;height:32px;background:rgba(115,191,105,0.18)"></div>
<div class="cell" style="left:1586px;top:469px;width:10px;height:32px;background:rgba(115,191,105,0.18)"></div>
<div class="cell" style="left:1598px;top:469px;width:10px;height:32px;background:rgba(115,191,105,0.18)"></div>
<div class="cell" style="left:1610px;top:469px;width:10px;height:32px;background:rgba(115,191,105,0.18)"></div>
<div class="cell" style="left:1622px;top:469px;width:10px;height:32px;background:rgba(115,191,105,0.18)"></div>
<div class="cell" style="left:1634px;top:469px;width:10px;height:32px;background:rgba(115,191,105,0.18)"></div>
<div class="cell" style="left:1646px;top:469px;width:10px;height:32px;background:rgba(115,191,105,0.18)"></div>
<div class="cell" style="left:1658px;top:469px;width:10px;height:32px;background:rgba(115,191,105,0.18)"></div>
<div class="cell" style="left:1670px;top:469px;width:10px;height:32px;background:rgba(115,191,105,0.18)"></div>
<div class="cell" style="left:1682px;top:469px;width:10px;height:32px;background:rgba(115,191,105,0.18)"></div>
<div class="cell" style="left:1694px;top:469px;width:10px;height:32px;background:rgba(115,191,105,0.18)"></div>
<div class="cell" style="left:1706px;top:469px;width:10px;height:32px;background:rgba(115,191,105,0.18)"></div>
<div class="cell" style="left:1718px;top:469px;width:10px;height:32px;background:rgba(115,191,105,0.18)"></div>
<div class="cell" style="left:1730px;top:469px;width:10px;height:32px;background:rgba(115,191,105,0.18)"></div>
<div class="cell" style="left:1742px;top:469px;width:10px;height:32px;background:rgba(115,191,105,0.18)"></div>
<div class="cell" style="left:1754px;top:469px;width:10px;height:32px;background:rgba(115,191,105,0.18)"></div>
<div class="cell" style="left:1766px;top:469px;width:10px;height:32px;background:rgba(115,191,105,0.18)"></div>
<div class="cell" style="left:1778px;top:469px;width:10px;height:32px;background:rgba(250,222,42,0.18)"></div>
<div class="cell" style="left:1790px;top:469px;width:10px;height:32px;background:rgba(250,222,42,0.18)"></div>
<div class="cell" style="left:1802px;top:469px;width:10px;height:32px;background:rgba(250,222,42,0.18)"></div>
<div class="cell" style="left:1814px;top:469px;width:10px;height:32px;background:rgba(242,73,92,0.18)"></div>
<div class="cell" style="left:1826px;top:469px;width:10px;height:32px;background:rgba(242,73,92,0.18)"></div>
<div class="cell" style="left:1838px;top:469px;width:10px;height:32px;background:rgba(242,73,92,0.18)"></div>
<div class="t" style="left:1888.09px;top:475.48px;font-size:19.50px;color:#73bf69;letter-spacing:0.585px">4.62%</div>
<div class="panel" style="left:1985px;top:290px;width:274px;height:220px"></div>
<div class="t" style="left:1993.8px;top:300.00px;font-size:15px;color:#ccccdc;font-weight:normal;letter-spacing:0.15px;-webkit-text-stroke:0.25px #ccccdc">Average Response Time</div>
<svg style="left:0;top:0" width="2265" height="1166" viewBox="0 0 2265 1166">
<path d="M1987 509 L1988 508 L1993.6 435.4 L2007 436.3 L2007 509 Z" fill="rgba(115,191,105,0.18)"/>
<path d="M2014 509 L2014.5 438 L2016.5 401.2 L2193.3 409.6 L2193.3 509 Z" fill="rgba(115,191,105,0.18)"/>
<path d="M2198.5 509 L2198.5 409.8 L2200 409.8 L2200 509 Z" fill="rgba(115,191,105,0.18)"/>
<path d="M2204.5 509 L2204.5 410.5 L2257 412.5 L2257 509 Z" fill="rgba(115,191,105,0.18)"/>
<path d="M1986.5 508.5 L1988.5 508.5 L1993.6 435.4 L2007 436.3" fill="none" stroke="#73bf69" stroke-width="1"/>
<path d="M2014.3 438 L2016.5 401.2 L2193.3 409.6" fill="none" stroke="#73bf69" stroke-width="1"/>
<path d="M2198.5 409.8 L2200 409.8" fill="none" stroke="#73bf69" stroke-width="1"/>
<path d="M2204.5 410.5 L2257 412.5" fill="none" stroke="#73bf69" stroke-width="1"/>
</svg>
<div class="t" style="left:2022.20px;top:381.64px;font-size:68.00px;color:#73bf69;-webkit-text-stroke:2.4px #73bf69;letter-spacing:0.900px"><span style="margin:0 -0.06em 0 -0.03em">1</span>2.4</div>
<div class="t" style="left:2163.91px;top:404.92px;font-size:42.50px;color:#73bf69;-webkit-text-stroke:0.7px #73bf69;letter-spacing:-1.350px">ms</div>
<div class="panel" style="left:12px;top:556px;width:2247px;height:296px"></div>
<div class="t" style="left:20.8px;top:566.00px;font-size:15px;color:#ccccdc;font-weight:normal;letter-spacing:0.15px;-webkit-text-stroke:0.25px #ccccdc">Collection Configuration</div>
<div class="a" style="left:21.0px;top:625px;width:2228.7px;height:1px;background:rgba(204,204,220,0.12);"></div>
<div class="t" style="left:27.3px;top:604.00px;font-size:15px;color:#ccccdc;font-weight:normal;letter-spacing:0.22px;-webkit-text-stroke:0.25px #ccccdc">collection_id</div>
<div class="t" style="left:-701.9125px;width:2000px;text-align:center;top:604.00px;font-size:15px;color:#ccccdc;font-weight:normal;letter-spacing:0.22px;-webkit-text-stroke:0.25px #ccccdc">distance</div>
<div class="t" style="left:398.75px;top:604.00px;font-size:15px;color:#ccccdc;font-weight:normal;letter-spacing:0.22px;-webkit-text-stroke:0.25px #ccccdc">mode</div>
<div class="t" style="right:1511.08px;top:604.00px;font-size:15px;color:#ccccdc;font-weight:normal;letter-spacing:0.22px;-webkit-text-stroke:0.25px #ccccdc">vector_size</div>
<div class="t" style="right:1325.355px;top:604.00px;font-size:15px;color:#ccccdc;font-weight:normal;letter-spacing:0.22px;-webkit-text-stroke:0.25px #ccccdc">number_of_shards</div>
<div class="t" style="right:1139.63px;top:604.00px;font-size:15px;color:#ccccdc;font-weight:normal;letter-spacing:0.22px;-webkit-text-stroke:0.25px #ccccdc">on_disk_vector</div>
<div class="t" style="right:953.905px;top:604.00px;font-size:15px;color:#ccccdc;font-weight:normal;letter-spacing:0.22px;-webkit-text-stroke:0.25px #ccccdc">on_disk_payload</div>
<div class="t" style="right:768.1800000000001px;top:604.00px;font-size:15px;color:#ccccdc;font-weight:normal;letter-spacing:0.22px;-webkit-text-stroke:0.25px #ccccdc">read_fanout_factor</div>
<div class="t" style="right:582.4550000000002px;top:604.00px;font-size:15px;color:#ccccdc;font-weight:normal;letter-spacing:0.22px;-webkit-text-stroke:0.25px #ccccdc">replication_factor</div>
<div class="t" style="right:396.73px;top:604.00px;font-size:15px;color:#ccccdc;font-weight:normal;letter-spacing:0.22px;-webkit-text-stroke:0.25px #ccccdc">write_consistency_factor</div>
<div class="t" style="right:211.0050000000001px;top:604.00px;font-size:15px;color:#ccccdc;font-weight:normal;letter-spacing:0.22px;-webkit-text-stroke:0.25px #ccccdc">wal_capacity_mb</div>
<div class="t" style="right:25.2800000000002px;top:604.00px;font-size:15px;color:#ccccdc;font-weight:normal;letter-spacing:0.22px;-webkit-text-stroke:0.25px #ccccdc">wal_segments_ahead</div>
<div class="a" style="left:206px;top:626px;width:1px;height:210px;background:rgba(204,204,220,0.12);"></div>
<div class="a" style="left:392px;top:626px;width:1px;height:210px;background:rgba(204,204,220,0.12);"></div>
<div class="a" style="left:578px;top:626px;width:1px;height:210px;background:rgba(204,204,220,0.12);"></div>
<div class="a" style="left:763px;top:626px;width:1px;height:210px;background:rgba(204,204,220,0.12);"></div>
<div class="a" style="left:949px;top:626px;width:1px;height:210px;background:rgba(204,204,220,0.12);"></div>
<div class="a" style="left:1135px;top:626px;width:1px;height:210px;background:rgba(204,204,220,0.12);"></div>
<div class="a" style="left:1321px;top:626px;width:1px;height:210px;background:rgba(204,204,220,0.12);"></div>
<div class="a" style="left:1506px;top:626px;width:1px;height:210px;background:rgba(204,204,220,0.12);"></div>
<div class="a" style="left:1692px;top:626px;width:1px;height:210px;background:rgba(204,204,220,0.12);"></div>
<div class="a" style="left:1878px;top:626px;width:1px;height:210px;background:rgba(204,204,220,0.12);"></div>
<div class="a" style="left:2063px;top:626px;width:1px;height:210px;background:rgba(204,204,220,0.12);"></div>
<div class="a" style="left:21.0px;top:661px;width:2228.7px;height:1px;background:rgba(204,204,220,0.12);"></div>
<div class="a" style="left:21.0px;top:697px;width:2228.7px;height:1px;background:rgba(204,204,220,0.12);"></div>
<div class="a" style="left:21.0px;top:733px;width:2228.7px;height:1px;background:rgba(204,204,220,0.12);"></div>
<div class="a" style="left:21.0px;top:769px;width:2228.7px;height:1px;background:rgba(204,204,220,0.12);"></div>
<div class="a" style="left:21.0px;top:805px;width:2228.7px;height:1px;background:rgba(204,204,220,0.12);"></div>
<div class="t" style="left:27.3px;top:636.00px;font-size:15.5px;color:#ccccdc;font-weight:normal;letter-spacing:-0.25px">2046765614452144224</div>
<div class="t" style="left:-700.9125px;width:2000px;text-align:center;top:636.00px;font-size:15.5px;color:#ccccdc;font-weight:normal;letter-spacing:-0.25px">Cosine</div>
<div class="t" style="left:398.75px;top:636.00px;font-size:15.5px;color:#ccccdc;font-weight:normal;letter-spacing:-0.25px">SingleMode</div>
<div class="t" style="right:1508.35px;top:636.00px;font-size:15.5px;color:#ccccdc;font-weight:normal;letter-spacing:-0.25px">768</div>
<div class="t" style="right:1322.625px;top:636.00px;font-size:15.5px;color:#ccccdc;font-weight:normal;letter-spacing:-0.25px">5</div>
<div class="t" style="right:1136.9px;top:636.00px;font-size:15.5px;color:#73bf69;font-weight:normal;letter-spacing:-0.25px">Enabled</div>
<div class="t" style="right:951.175px;top:636.00px;font-size:15.5px;color:#73bf69;font-weight:normal;letter-spacing:-0.25px">Enabled</div>
<div class="t" style="right:765.45px;top:636.00px;font-size:15.5px;color:#ccccdc;font-weight:normal;letter-spacing:-0.25px">0</div>
<div class="t" style="right:579.7250000000001px;top:636.00px;font-size:15.5px;color:#ccccdc;font-weight:normal;letter-spacing:-0.25px">2</div>
<div class="t" style="right:394.0px;top:636.00px;font-size:15.5px;color:#ccccdc;font-weight:normal;letter-spacing:-0.25px">2</div>
<div class="t" style="right:208.2750000000001px;top:636.00px;font-size:15.5px;color:#ccccdc;font-weight:normal;letter-spacing:-0.25px">32</div>
<div class="t" style="right:22.550000000000182px;top:636.00px;font-size:15.5px;color:#ccccdc;font-weight:normal;letter-spacing:-0.25px">0</div>
<div class="t" style="left:27.3px;top:672.00px;font-size:15.5px;color:#ccccdc;font-weight:normal;letter-spacing:-0.25px">2414669213167301915</div>
<div class="t" style="right:1322.625px;top:672.00px;font-size:15.5px;color:#ccccdc;font-weight:normal;letter-spacing:-0.25px">5</div>
<div class="t" style="right:951.175px;top:672.00px;font-size:15.5px;color:#73bf69;font-weight:normal;letter-spacing:-0.25px">Enabled</div>
<div class="t" style="right:765.45px;top:672.00px;font-size:15.5px;color:#ccccdc;font-weight:normal;letter-spacing:-0.25px">0</div>
<div class="t" style="right:579.7250000000001px;top:672.00px;font-size:15.5px;color:#ccccdc;font-weight:normal;letter-spacing:-0.25px">1</div>
<div class="t" style="right:394.0px;top:672.00px;font-size:15.5px;color:#ccccdc;font-weight:normal;letter-spacing:-0.25px">1</div>
<div class="t" style="right:208.2750000000001px;top:672.00px;font-size:15.5px;color:#ccccdc;font-weight:normal;letter-spacing:-0.25px">32</div>
<div class="t" style="right:22.550000000000182px;top:672.00px;font-size:15.5px;color:#ccccdc;font-weight:normal;letter-spacing:-0.25px">0</div>
<div class="t" style="left:27.3px;top:708.00px;font-size:15.5px;color:#ccccdc;font-weight:normal;letter-spacing:-0.25px">5784502880052646172</div>
<div class="t" style="left:-700.9125px;width:2000px;text-align:center;top:708.00px;font-size:15.5px;color:#ccccdc;font-weight:normal;letter-spacing:-0.25px">Cosine</div>
<div class="t" style="left:398.75px;top:708.00px;font-size:15.5px;color:#ccccdc;font-weight:normal;letter-spacing:-0.25px">SingleMode</div>
<div class="t" style="right:1508.35px;top:708.00px;font-size:15.5px;color:#ccccdc;font-weight:normal;letter-spacing:-0.25px">768</div>
<div class="t" style="right:1322.625px;top:708.00px;font-size:15.5px;color:#ccccdc;font-weight:normal;letter-spacing:-0.25px">5</div>
<div class="t" style="right:1136.9px;top:708.00px;font-size:15.5px;color:#73bf69;font-weight:normal;letter-spacing:-0.25px">Enabled</div>
<div class="t" style="right:951.175px;top:708.00px;font-size:15.5px;color:#73bf69;font-weight:normal;letter-spacing:-0.25px">Enabled</div>
<div class="t" style="right:765.45px;top:708.00px;font-size:15.5px;color:#ccccdc;font-weight:normal;letter-spacing:-0.25px">0</div>
<div class="t" style="right:579.7250000000001px;top:708.00px;font-size:15.5px;color:#ccccdc;font-weight:normal;letter-spacing:-0.25px">2</div>
<div class="t" style="right:394.0px;top:708.00px;font-size:15.5px;color:#ccccdc;font-weight:normal;letter-spacing:-0.25px">2</div>
<div class="t" style="right:208.2750000000001px;top:708.00px;font-size:15.5px;color:#ccccdc;font-weight:normal;letter-spacing:-0.25px">32</div>
<div class="t" style="right:22.550000000000182px;top:708.00px;font-size:15.5px;color:#ccccdc;font-weight:normal;letter-spacing:-0.25px">0</div>
<div class="t" style="left:27.3px;top:744.00px;font-size:15.5px;color:#ccccdc;font-weight:normal;letter-spacing:-0.25px">6103281899494060928</div>
<div class="t" style="left:-700.9125px;width:2000px;text-align:center;top:744.00px;font-size:15.5px;color:#ccccdc;font-weight:normal;letter-spacing:-0.25px">Cosine</div>
<div class="t" style="left:398.75px;top:744.00px;font-size:15.5px;color:#ccccdc;font-weight:normal;letter-spacing:-0.25px">SingleMode</div>
<div class="t" style="right:1508.35px;top:744.00px;font-size:15.5px;color:#ccccdc;font-weight:normal;letter-spacing:-0.25px">384</div>
<div class="t" style="right:1322.625px;top:744.00px;font-size:15.5px;color:#ccccdc;font-weight:normal;letter-spacing:-0.25px">1</div>
<div class="t" style="right:1136.9px;top:744.00px;font-size:15.5px;color:#73bf69;font-weight:normal;letter-spacing:-0.25px">Enabled</div>
<div class="t" style="right:951.175px;top:744.00px;font-size:15.5px;color:#73bf69;font-weight:normal;letter-spacing:-0.25px">Enabled</div>
<div class="t" style="right:765.45px;top:744.00px;font-size:15.5px;color:#ccccdc;font-weight:normal;letter-spacing:-0.25px">0</div>
<div class="t" style="right:579.7250000000001px;top:744.00px;font-size:15.5px;color:#ccccdc;font-weight:normal;letter-spacing:-0.25px">1</div>
<div class="t" style="right:394.0px;top:744.00px;font-size:15.5px;color:#ccccdc;font-weight:normal;letter-spacing:-0.25px">1</div>
<div class="t" style="right:208.2750000000001px;top:744.00px;font-size:15.5px;color:#ccccdc;font-weight:normal;letter-spacing:-0.25px">32</div>
<div class="t" style="right:22.550000000000182px;top:744.00px;font-size:15.5px;color:#ccccdc;font-weight:normal;letter-spacing:-0.25px">0</div>
<div class="t" style="left:27.3px;top:780.00px;font-size:15.5px;color:#ccccdc;font-weight:normal;letter-spacing:-0.25px">7006343345257067753</div>
<div class="t" style="left:-700.9125px;width:2000px;text-align:center;top:780.00px;font-size:15.5px;color:#ccccdc;font-weight:normal;letter-spacing:-0.25px">Cosine</div>
<div class="t" style="left:398.75px;top:780.00px;font-size:15.5px;color:#ccccdc;font-weight:normal;letter-spacing:-0.25px">SingleMode</div>
<div class="t" style="right:1508.35px;top:780.00px;font-size:15.5px;color:#ccccdc;font-weight:normal;letter-spacing:-0.25px">512</div>
<div class="t" style="right:1322.625px;top:780.00px;font-size:15.5px;color:#ccccdc;font-weight:normal;letter-spacing:-0.25px">1</div>
<div class="t" style="right:1136.9px;top:780.00px;font-size:15.5px;color:#ccccdc;font-weight:normal;letter-spacing:-0.25px">Not Set</div>
<div class="t" style="right:951.175px;top:780.00px;font-size:15.5px;color:#73bf69;font-weight:normal;letter-spacing:-0.25px">Enabled</div>
<div class="t" style="right:765.45px;top:780.00px;font-size:15.5px;color:#ccccdc;font-weight:normal;letter-spacing:-0.25px">3</div>
<div class="t" style="right:579.7250000000001px;top:780.00px;font-size:15.5px;color:#ccccdc;font-weight:normal;letter-spacing:-0.25px">3</div>
<div class="t" style="right:394.0px;top:780.00px;font-size:15.5px;color:#ccccdc;font-weight:normal;letter-spacing:-0.25px">3</div>
<div class="t" style="right:208.2750000000001px;top:780.00px;font-size:15.5px;color:#ccccdc;font-weight:normal;letter-spacing:-0.25px">1</div>
<div class="t" style="right:22.550000000000182px;top:780.00px;font-size:15.5px;color:#ccccdc;font-weight:normal;letter-spacing:-0.25px">0</div>
<div class="t" style="left:27.3px;top:816.00px;font-size:15.5px;color:#ccccdc;font-weight:normal;letter-spacing:-0.25px">7635732782257866281</div>
<div class="t" style="left:-700.9125px;width:2000px;text-align:center;top:816.00px;font-size:15.5px;color:#ccccdc;font-weight:normal;letter-spacing:-0.25px">Cosine</div>
<div class="t" style="left:398.75px;top:816.00px;font-size:15.5px;color:#ccccdc;font-weight:normal;letter-spacing:-0.25px">SingleMode</div>
<div class="t" style="right:1508.35px;top:816.00px;font-size:15.5px;color:#ccccdc;font-weight:normal;letter-spacing:-0.25px">4</div>
<div class="t" style="right:1322.625px;top:816.00px;font-size:15.5px;color:#ccccdc;font-weight:normal;letter-spacing:-0.25px">5</div>
<div class="t" style="right:1136.9px;top:816.00px;font-size:15.5px;color:#ccccdc;font-weight:normal;letter-spacing:-0.25px">Not Set</div>
<div class="t" style="right:951.175px;top:816.00px;font-size:15.5px;color:#73bf69;font-weight:normal;letter-spacing:-0.25px">Enabled</div>
<div class="t" style="right:765.45px;top:816.00px;font-size:15.5px;color:#ccccdc;font-weight:normal;letter-spacing:-0.25px">0</div>
<div class="t" style="right:579.7250000000001px;top:816.00px;font-size:15.5px;color:#ccccdc;font-weight:normal;letter-spacing:-0.25px">1</div>
<div class="t" style="right:394.0px;top:816.00px;font-size:15.5px;color:#ccccdc;font-weight:normal;letter-spacing:-0.25px">1</div>
<div class="t" style="right:208.2750000000001px;top:816.00px;font-size:15.5px;color:#ccccdc;font-weight:normal;letter-spacing:-0.25px">32</div>
<div class="t" style="right:22.550000000000182px;top:816.00px;font-size:15.5px;color:#ccccdc;font-weight:normal;letter-spacing:-0.25px">0</div>
<div class="panel" style="left:12px;top:860px;width:1213px;height:296px"></div>
<div class="t" style="left:20.8px;top:870.00px;font-size:15px;color:#ccccdc;font-weight:normal;letter-spacing:0.15px;-webkit-text-stroke:0.25px #ccccdc">HNSW Configuration</div>
<div class="a" style="left:0;top:930px;width:2265px;height:209px;overflow:hidden">
<div class="a" style="left:21px;top:-100px;width:1195px;height:1px;background:rgba(204,204,220,0.12);"></div>
<div class="t" style="left:27.3px;top:-121.00px;font-size:15px;color:#ccccdc;font-weight:normal;letter-spacing:0.22px;-webkit-text-stroke:0.25px #ccccdc"></div>
<div class="t" style="right:1880.3799999999999px;top:-121.00px;font-size:15px;color:#ccccdc;font-weight:normal;letter-spacing:0.22px;-webkit-text-stroke:0.25px #ccccdc"></div>
<div class="t" style="right:1693.68px;top:-121.00px;font-size:15px;color:#ccccdc;font-weight:normal;letter-spacing:0.22px;-webkit-text-stroke:0.25px #ccccdc"></div>
<div class="t" style="right:1620.58px;top:-121.00px;font-size:15px;color:#ccccdc;font-weight:normal;letter-spacing:0.22px;-webkit-text-stroke:0.25px #ccccdc"></div>
<div class="t" style="right:1433.58px;top:-121.00px;font-size:15px;color:#ccccdc;font-weight:normal;letter-spacing:0.22px;-webkit-text-stroke:0.25px #ccccdc"></div>
<div class="t" style="right:1246.78px;top:-121.00px;font-size:15px;color:#ccccdc;font-weight:normal;letter-spacing:0.22px;-webkit-text-stroke:0.25px #ccccdc"></div>
<div class="t" style="right:1058.98px;top:-121.00px;font-size:15px;color:#ccccdc;font-weight:normal;letter-spacing:0.22px;-webkit-text-stroke:0.25px #ccccdc"></div>
<div class="a" style="left:207px;top:-99px;width:1px;height:308px;background:rgba(204,204,220,0.12);"></div>
<div class="a" style="left:394px;top:-99px;width:1px;height:308px;background:rgba(204,204,220,0.12);"></div>
<div class="a" style="left:581px;top:-99px;width:1px;height:308px;background:rgba(204,204,220,0.12);"></div>
<div class="a" style="left:654px;top:-99px;width:1px;height:308px;background:rgba(204,204,220,0.12);"></div>
<div class="a" style="left:841px;top:-99px;width:1px;height:308px;background:rgba(204,204,220,0.12);"></div>
<div class="a" style="left:1028px;top:-99px;width:1px;height:308px;background:rgba(204,204,220,0.12);"></div>
<div class="a" style="left:21px;top:29px;width:1195px;height:1px;background:rgba(204,204,220,0.12);"></div>
<div class="a" style="left:21px;top:65px;width:1195px;height:1px;background:rgba(204,204,220,0.12);"></div>
<div class="a" style="left:21px;top:101px;width:1195px;height:1px;background:rgba(204,204,220,0.12);"></div>
<div class="a" style="left:21px;top:137px;width:1195px;height:1px;background:rgba(204,204,220,0.12);"></div>
<div class="a" style="left:21px;top:173px;width:1195px;height:1px;background:rgba(204,204,220,0.12);"></div>
<div class="t" style="left:27.3px;top:4.00px;font-size:15.5px;color:#ccccdc;font-weight:normal;letter-spacing:-0.25px">10579195797558493215</div>
<div class="t" style="right:1877.65px;top:4.00px;font-size:15.5px;color:#ccccdc;font-weight:normal;letter-spacing:-0.25px">100</div>
<div class="t" style="right:1690.95px;top:4.00px;font-size:15.5px;color:#ccccdc;font-weight:normal;letter-spacing:-0.25px">10</div>
<div class="t" style="right:1617.85px;top:4.00px;font-size:15.5px;color:#ccccdc;font-weight:normal;letter-spacing:-0.25px">16</div>
<div class="t" style="right:1430.85px;top:4.00px;font-size:15.5px;color:#ccccdc;font-weight:normal;letter-spacing:-0.25px">not set</div>
<div class="t" style="right:1244.05px;top:4.00px;font-size:15.5px;color:#73bf69;font-weight:normal;letter-spacing:-0.25px">False</div>
<div class="t" style="right:1056.25px;top:4.00px;font-size:15.5px;color:#ccccdc;font-weight:normal;letter-spacing:-0.25px">not set</div>
<div class="t" style="left:27.3px;top:40.00px;font-size:15.5px;color:#ccccdc;font-weight:normal;letter-spacing:-0.25px">12641355858801504409</div>
<div class="t" style="right:1877.65px;top:40.00px;font-size:15.5px;color:#ccccdc;font-weight:normal;letter-spacing:-0.25px">100</div>
<div class="t" style="right:1690.95px;top:40.00px;font-size:15.5px;color:#ccccdc;font-weight:normal;letter-spacing:-0.25px">10</div>
<div class="t" style="right:1617.85px;top:40.00px;font-size:15.5px;color:#ccccdc;font-weight:normal;letter-spacing:-0.25px">16</div>
<div class="t" style="right:1430.85px;top:40.00px;font-size:15.5px;color:#ccccdc;font-weight:normal;letter-spacing:-0.25px">not set</div>
<div class="t" style="right:1244.05px;top:40.00px;font-size:15.5px;color:#73bf69;font-weight:normal;letter-spacing:-0.25px">False</div>
<div class="t" style="right:1056.25px;top:40.00px;font-size:15.5px;color:#ccccdc;font-weight:normal;letter-spacing:-0.25px">not set</div>
<div class="t" style="left:27.3px;top:76.00px;font-size:15.5px;color:#ccccdc;font-weight:normal;letter-spacing:-0.25px">13351287679039810034</div>
<div class="t" style="right:1877.65px;top:76.00px;font-size:15.5px;color:#ccccdc;font-weight:normal;letter-spacing:-0.25px">100</div>
<div class="t" style="right:1690.95px;top:76.00px;font-size:15.5px;color:#ccccdc;font-weight:normal;letter-spacing:-0.25px">10</div>
<div class="t" style="right:1617.85px;top:76.00px;font-size:15.5px;color:#ccccdc;font-weight:normal;letter-spacing:-0.25px">16</div>
<div class="t" style="right:1430.85px;top:76.00px;font-size:15.5px;color:#ccccdc;font-weight:normal;letter-spacing:-0.25px">not set</div>
<div class="t" style="right:1244.05px;top:76.00px;font-size:15.5px;color:#73bf69;font-weight:normal;letter-spacing:-0.25px">False</div>
<div class="t" style="right:1056.25px;top:76.00px;font-size:15.5px;color:#ccccdc;font-weight:normal;letter-spacing:-0.25px">not set</div>
<div class="t" style="left:27.3px;top:112.00px;font-size:15.5px;color:#ccccdc;font-weight:normal;letter-spacing:-0.25px">14934897044910252711</div>
<div class="t" style="right:1877.65px;top:112.00px;font-size:15.5px;color:#ccccdc;font-weight:normal;letter-spacing:-0.25px">100</div>
<div class="t" style="right:1690.95px;top:112.00px;font-size:15.5px;color:#ccccdc;font-weight:normal;letter-spacing:-0.25px">10</div>
<div class="t" style="right:1617.85px;top:112.00px;font-size:15.5px;color:#ccccdc;font-weight:normal;letter-spacing:-0.25px">16</div>
<div class="t" style="right:1430.85px;top:112.00px;font-size:15.5px;color:#ccccdc;font-weight:normal;letter-spacing:-0.25px">not set</div>
<div class="t" style="right:1244.05px;top:112.00px;font-size:15.5px;color:#73bf69;font-weight:normal;letter-spacing:-0.25px">False</div>
<div class="t" style="right:1056.25px;top:112.00px;font-size:15.5px;color:#ccccdc;font-weight:normal;letter-spacing:-0.25px">not set</div>
<div class="t" style="left:27.3px;top:148.00px;font-size:15.5px;color:#ccccdc;font-weight:normal;letter-spacing:-0.25px">15259105786508220604</div>
<div class="t" style="right:1877.65px;top:148.00px;font-size:15.5px;color:#ccccdc;font-weight:normal;letter-spacing:-0.25px">100</div>
<div class="t" style="right:1690.95px;top:148.00px;font-size:15.5px;color:#ccccdc;font-weight:normal;letter-spacing:-0.25px">10</div>
<div class="t" style="right:1617.85px;top:148.00px;font-size:15.5px;color:#ccccdc;font-weight:normal;letter-spacing:-0.25px">16</div>
<div class="t" style="right:1430.85px;top:148.00px;font-size:15.5px;color:#ccccdc;font-weight:normal;letter-spacing:-0.25px">not set</div>
<div class="t" style="right:1244.05px;top:148.00px;font-size:15.5px;color:#73bf69;font-weight:normal;letter-spacing:-0.25px">False</div>
<div class="t" style="right:1056.25px;top:148.00px;font-size:15.5px;color:#ccccdc;font-weight:normal;letter-spacing:-0.25px">not set</div>
<div class="t" style="left:27.3px;top:184.00px;font-size:15.5px;color:#ccccdc;font-weight:normal;letter-spacing:-0.25px">17493298043295264108</div>
<div class="t" style="right:1877.65px;top:184.00px;font-size:15.5px;color:#ccccdc;font-weight:normal;letter-spacing:-0.25px">100</div>
<div class="t" style="right:1690.95px;top:184.00px;font-size:15.5px;color:#ccccdc;font-weight:normal;letter-spacing:-0.25px">10</div>
<div class="t" style="right:1617.85px;top:184.00px;font-size:15.5px;color:#ccccdc;font-weight:normal;letter-spacing:-0.25px">16</div>
<div class="t" style="right:1430.85px;top:184.00px;font-size:15.5px;color:#ccccdc;font-weight:normal;letter-spacing:-0.25px">not set</div>
<div class="t" style="right:1244.05px;top:184.00px;font-size:15.5px;color:#73bf69;font-weight:normal;letter-spacing:-0.25px">False</div>
<div class="t" style="right:1056.25px;top:184.00px;font-size:15.5px;color:#ccccdc;font-weight:normal;letter-spacing:-0.25px">not set</div>
</div>
<div class="a" style="left:21px;top:929px;width:1195px;height:1px;background:rgba(204,204,220,0.12);"></div>
<div class="t" style="left:27.3px;top:908.00px;font-size:15px;color:#ccccdc;font-weight:normal;letter-spacing:0.22px;-webkit-text-stroke:0.25px #ccccdc">collection_id</div>
<div class="t" style="right:1880.3799999999999px;top:908.00px;font-size:15px;color:#ccccdc;font-weight:normal;letter-spacing:0.22px;-webkit-text-stroke:0.25px #ccccdc">ef_construct</div>
<div class="t" style="right:1693.68px;top:908.00px;font-size:15px;color:#ccccdc;font-weight:normal;letter-spacing:0.22px;-webkit-text-stroke:0.25px #ccccdc">full_scan_threshold</div>
<div class="t" style="right:1620.58px;top:908.00px;font-size:15px;color:#ccccdc;font-weight:normal;letter-spacing:0.22px;-webkit-text-stroke:0.25px #ccccdc">m</div>
<div class="t" style="right:1433.58px;top:908.00px;font-size:15px;color:#ccccdc;font-weight:normal;letter-spacing:0.22px;-webkit-text-stroke:0.25px #ccccdc">max_indexing_threads</div>
<div class="t" style="right:1246.78px;top:908.00px;font-size:15px;color:#ccccdc;font-weight:normal;letter-spacing:0.22px;-webkit-text-stroke:0.25px #ccccdc">on_disk</div>
<div class="t" style="right:1058.98px;top:908.00px;font-size:15px;color:#ccccdc;font-weight:normal;letter-spacing:0.22px;-webkit-text-stroke:0.25px #ccccdc">payload_m</div>
<div class="panel" style="left:1233px;top:860px;width:1026px;height:296px"></div>
<div class="t" style="left:1241.8px;top:870.00px;font-size:15px;color:#ccccdc;font-weight:normal;letter-spacing:0.15px;-webkit-text-stroke:0.25px #ccccdc">Quantization</div>
<div class="a" style="left:1242px;top:929px;width:1007.6999999999998px;height:1px;background:rgba(204,204,220,0.12);"></div>
<div class="t" style="left:1248.3px;top:908.00px;font-size:15px;color:#ccccdc;font-weight:normal;letter-spacing:0.22px;-webkit-text-stroke:0.25px #ccccdc">collection_id</div>
<div class="t" style="left:492.0999999999999px;width:2000px;text-align:center;top:908.00px;font-size:15px;color:#ccccdc;font-weight:normal;letter-spacing:0.22px;-webkit-text-stroke:0.25px #ccccdc">quantization_type</div>
<div class="t" style="right:551.0799999999999px;top:908.00px;font-size:15px;color:#ccccdc;font-weight:normal;letter-spacing:0.22px;-webkit-text-stroke:0.25px #ccccdc">always_ram</div>
<div class="t" style="right:361.5799999999999px;top:908.00px;font-size:15px;color:#ccccdc;font-weight:normal;letter-spacing:0.22px;-webkit-text-stroke:0.25px #ccccdc">product_compression</div>
<div class="t" style="right:193.57999999999993px;top:908.00px;font-size:15px;color:#ccccdc;font-weight:normal;letter-spacing:0.22px;-webkit-text-stroke:0.25px #ccccdc">scalar_quantile</div>
<div class="t" style="left:2087.7000000000003px;top:908.00px;font-size:15px;color:#ccccdc;font-weight:normal;letter-spacing:0.22px;-webkit-text-stroke:0.25px #ccccdc">scalar_type</div>
<div class="a" style="left:1409px;top:930px;width:1px;height:107px;background:rgba(204,204,220,0.12);"></div>
<div class="a" style="left:1577px;top:930px;width:1px;height:107px;background:rgba(204,204,220,0.12);"></div>
<div class="a" style="left:1745px;top:930px;width:1px;height:107px;background:rgba(204,204,220,0.12);"></div>
<div class="a" style="left:1913px;top:930px;width:1px;height:107px;background:rgba(204,204,220,0.12);"></div>
<div class="a" style="left:2081px;top:930px;width:1px;height:107px;background:rgba(204,204,220,0.12);"></div>
<div class="a" style="left:1242px;top:965px;width:1007.6999999999998px;height:1px;background:rgba(204,204,220,0.12);"></div>
<div class="a" style="left:1242px;top:1001px;width:1007.6999999999998px;height:1px;background:rgba(204,204,220,0.12);"></div>
<div class="a" style="left:1242px;top:930.4px;width:167px;height:35px;overflow:hidden">
<div class="t" style="left:6.3px;top:9.60px;font-size:15.5px;color:#ccccdc;letter-spacing:-0.25px">2046765614452144224</div></div>
<div class="t" style="left:493.0999999999999px;width:2000px;text-align:center;top:940.00px;font-size:15.5px;color:#ccccdc;font-weight:normal;letter-spacing:-0.25px">product</div>
<div class="t" style="right:526.75px;top:940.00px;font-size:15.5px;color:#73bf69;font-weight:normal;letter-spacing:-0.25px">True</div>
<div class="t" style="right:358.8499999999999px;top:940.00px;font-size:15.5px;color:#ccccdc;font-weight:normal;letter-spacing:-0.25px">3</div>
<div class="t" style="right:190.8499999999999px;top:940.00px;font-size:15.5px;color:#ccccdc;font-weight:normal;letter-spacing:-0.25px">n/a</div>
<div class="a" style="left:2081px;top:930.4px;width:168px;height:35px;overflow:hidden">
<div class="t" style="left:6.3px;top:9.60px;font-size:15.5px;color:#ccccdc;letter-spacing:-0.25px">n/a</div></div>
<div class="a" style="left:1242px;top:966.4px;width:167px;height:35px;overflow:hidden">
<div class="t" style="left:6.3px;top:9.60px;font-size:15.5px;color:#ccccdc;letter-spacing:-0.25px">5784502880052646172</div></div>
<div class="t" style="left:493.0999999999999px;width:2000px;text-align:center;top:976.00px;font-size:15.5px;color:#ccccdc;font-weight:normal;letter-spacing:-0.25px">scalar</div>
<div class="t" style="right:526.75px;top:976.00px;font-size:15.5px;color:#73bf69;font-weight:normal;letter-spacing:-0.25px">True</div>
<div class="t" style="right:358.8499999999999px;top:976.00px;font-size:15.5px;color:#ccccdc;font-weight:normal;letter-spacing:-0.25px">n/a</div>
<div class="t" style="right:190.8499999999999px;top:976.00px;font-size:15.5px;color:#ccccdc;font-weight:normal;letter-spacing:-0.25px">0.990</div>
<div class="a" style="left:2081px;top:966.4px;width:168px;height:35px;overflow:hidden">
<div class="t" style="left:6.3px;top:9.60px;font-size:15.5px;color:#ccccdc;letter-spacing:-0.25px">int8</div></div>
<div class="a" style="left:1242px;top:1002.4px;width:167px;height:35px;overflow:hidden">
<div class="t" style="left:6.3px;top:9.60px;font-size:15.5px;color:#ccccdc;letter-spacing:-0.25px">14934897044910252711</div></div>
<div class="t" style="left:493.0999999999999px;width:2000px;text-align:center;top:1012.00px;font-size:15.5px;color:#ccccdc;font-weight:normal;letter-spacing:-0.25px">binary</div>
<div class="t" style="right:526.75px;top:1012.00px;font-size:15.5px;color:#73bf69;font-weight:normal;letter-spacing:-0.25px">True</div>
<div class="t" style="right:358.8499999999999px;top:1012.00px;font-size:15.5px;color:#ccccdc;font-weight:normal;letter-spacing:-0.25px">n/a</div>
<div class="t" style="right:190.8499999999999px;top:1012.00px;font-size:15.5px;color:#ccccdc;font-weight:normal;letter-spacing:-0.25px">n/a</div>
<div class="a" style="left:2081px;top:1002.4px;width:168px;height:35px;overflow:hidden">
<div class="t" style="left:6.3px;top:9.60px;font-size:15.5px;color:#ccccdc;letter-spacing:-0.25px">n/a</div></div>
<svg style="left:1722px;top:909px" width="10" height="12" viewBox="0 0 10 12"><path d="M5 11V1.5M1.3 5L5 1.3L8.7 5" fill="none" stroke="#ccccdc" stroke-width="1.5"/></svg>
<div class="panel" style="left:12px;top:1164px;width:2247px;height:40px"></div>
</div></body></html>
